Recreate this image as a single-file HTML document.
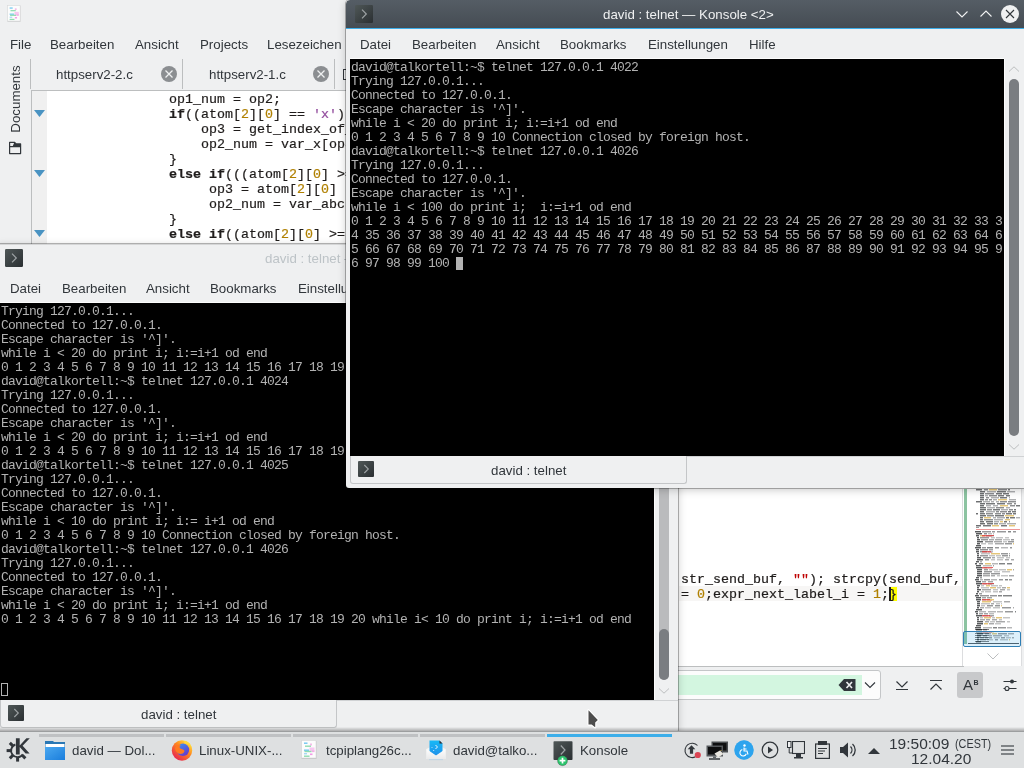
<!DOCTYPE html>
<html><head><meta charset="utf-8">
<style>
*{margin:0;padding:0;box-sizing:border-box}
html,body{width:1024px;height:768px;overflow:hidden;background:#eff0f1;font-family:"Liberation Sans",sans-serif;color:#31363b}
.a{position:absolute}
.t{position:absolute;white-space:pre;font-size:13.3px;line-height:16px;will-change:transform}
.term{position:absolute;background:#000;overflow:hidden}
.term pre{position:absolute;font-family:"Liberation Mono",monospace;font-size:13px;letter-spacing:-0.8012px;line-height:14px;color:#b2b2b2;white-space:pre;will-change:transform}
.code{position:absolute;font-family:"Liberation Mono",monospace;font-size:13.33px;line-height:15px;color:#1f1c1b;white-space:pre;will-change:transform;-webkit-text-stroke:0.2px #1f1c1b}
.kw{font-weight:bold}
.num{color:#b08000;-webkit-text-stroke-color:#b08000}
.chr{color:#924c9d;-webkit-text-stroke-color:#924c9d}
.str{color:#bf0303;-webkit-text-stroke-color:#bf0303}
.icn{position:absolute;width:18px;height:18px;border-radius:2px;background:linear-gradient(135deg,#4d5356 0%,#3b4043 50%,#2f3336 100%);box-shadow:inset 0 0 0 1px rgba(0,0,0,.25)}
.icn:after{content:"";position:absolute;left:4px;top:5px;width:6px;height:6px;border-right:1px solid #a5aaad;border-top:1px solid #a5aaad;transform:rotate(45deg)}
.i16{width:16px;height:16px;border-radius:1px}
.i16:after{left:3.5px;top:4.5px;width:5.5px;height:5.5px}

</style></head><body>
<div id="kate" class="a" style="left:0;top:0;width:1024px;height:731px;background:#eff0f1;overflow:hidden">
  <!-- kate app icon -->
  <svg class="a" style="left:7px;top:5px" width="14" height="18" viewBox="0 0 16 20">
    <rect x="0.5" y="1" width="15" height="18" fill="#000" fill-opacity=".12"/>
    <rect x="0.5" y="0.5" width="14.5" height="17.5" fill="#fcfcfc" stroke="#d6d7d8" stroke-width=".6"/>
    <g style="filter:blur(0.3px)">
    <rect x="3" y="2.5" width="3.5" height="1.4" fill="#6ec6f0"/><rect x="9" y="3.5" width="2" height="2" fill="#f0a0e0" fill-opacity=".7"/>
    <rect x="4" y="5.5" width="6" height="1.4" fill="#8fdcb0"/>
    <rect x="8.5" y="7.5" width="5" height="4" fill="#f4b0ea" fill-opacity=".7"/>
    <rect x="3" y="9.5" width="5" height="1.4" fill="#6ec6f0"/>
    <rect x="3.5" y="10.8" width="7" height="1.4" fill="#8fdcb0"/><rect x="11" y="10.5" width="2.5" height="1.6" fill="#f0a0e0" fill-opacity=".8"/>
    <rect x="3" y="13" width="3" height="1.4" fill="#a8d8f5"/><rect x="9" y="13.5" width="2.5" height="1.6" fill="#f080e0" fill-opacity=".8"/>
    <rect x="3" y="15.5" width="5.5" height="1.4" fill="#8fdcb0"/>
    </g>
  </svg>
  <!-- menu -->
  <div class="t" style="left:10px;top:37px">File</div>
  <div class="t" style="left:50px;top:37px">Bearbeiten</div>
  <div class="t" style="left:135px;top:37px">Ansicht</div>
  <div class="t" style="left:200px;top:37px">Projects</div>
  <div class="t" style="left:267px;top:37px">Lesezeichen</div>
  <!-- left sidebar -->
  <div class="t" style="left:-18px;top:91px;transform:rotate(-90deg);width:68px;text-align:center">Documents</div>
  <svg class="a" style="left:8px;top:140px" width="14" height="15" viewBox="0 0 14 15"><path d="M1.6 2.3 H6.4 L8.2 3.9 H12.6 V13.6 H1.6 Z M1.6 6.6 H12.6" fill="none" stroke="#31363b" stroke-width="1.2" stroke-linejoin="round"/><path d="M6.4 2.3 L8.2 3.9 H12.6 V6.6 H4.6 Z" fill="#31363b"/></svg>
  <!-- tabs -->
  <div class="a" style="left:30px;top:59px;width:1px;height:30px;background:#bcbebf"></div>
  <div class="t" style="left:56px;top:67px">httpserv2-2.c</div>
  <svg class="a" style="left:161px;top:66px" width="16" height="16"><circle cx="8" cy="8" r="8" fill="#8b8e91"/><path d="M4.5 4.5 L11.5 11.5 M11.5 4.5 L4.5 11.5" stroke="#eff0f1" stroke-width="1.3"/></svg>
  <div class="a" style="left:182px;top:59px;width:1px;height:30px;background:#bcbebf"></div>
  <div class="t" style="left:209px;top:67px">httpserv2-1.c</div>
  <svg class="a" style="left:313px;top:66px" width="16" height="16"><circle cx="8" cy="8" r="8" fill="#8b8e91"/><path d="M4.5 4.5 L11.5 11.5 M11.5 4.5 L4.5 11.5" stroke="#eff0f1" stroke-width="1.3"/></svg>
  <div class="a" style="left:334px;top:59px;width:1px;height:30px;background:#bcbebf"></div>
  <div class="a" style="left:343px;top:69px;width:6px;height:11px;border:1px solid #31363b;border-right:none"></div>
  <!-- code frame -->
  <div class="a" style="left:31px;top:90px;width:933px;height:577px;border-top:1px solid #bcbebf;border-left:1px solid #bcbebf;border-bottom:1px solid #bcbebf;background:#fff"></div>
  <div class="a" style="left:32px;top:91px;width:15px;height:575px;background:#f0f0f0"></div>
  <svg class="a" style="left:32px;top:91px" width="15" height="160">
    <path d="M2 19 H13 L7.5 26 Z" fill="#4a93c2"/>
    <path d="M2 79 H13 L7.5 86 Z" fill="#4a93c2"/>
    <path d="M2 139 H13 L7.5 146 Z" fill="#4a93c2"/>
  </svg>
  <pre class="code" style="left:169px;top:92px">op1_num = op2;
<span class="kw">if</span>((atom[<span class="num">2</span>][<span class="num">0</span>] == <span class="chr">'x'</span>) &amp;&amp; (atom[<span class="num">2</span>][<span class="num">1</span>] == <span class="num">0</span>))
    op3 = get_index_of_var(atom[<span class="num">2</span>]);
    op2_num = var_x[op3];
}
<span class="kw">else</span> <span class="kw">if</span>(((atom[<span class="num">2</span>][<span class="num">0</span>] &gt;= <span class="chr">'a'</span>)
     op3 = atom[<span class="num">2</span>][<span class="num">0</span>] - <span class="chr">'a'</span>;
     op2_num = var_abc[op3];
}
<span class="kw">else</span> <span class="kw">if</span>((atom[<span class="num">2</span>][<span class="num">0</span>] &gt;= <span class="chr">'0'</span>)
     op3 = atom[<span class="num">2</span>][<span class="num">0</span>] - <span class="chr">'0'</span>;</pre>
  <!-- bottom-right code -->
  <div class="a" style="left:679px;top:586px;width:284px;height:15px;background:#f7f6f5"></div>
  <div class="a" style="left:889px;top:587px;width:8px;height:14px;background:#ffff00"></div>
  <pre class="code" style="left:681px;top:572px">str_send_buf, <span class="str">""</span>); strcpy(send_buf, <span class="str">""</span>);
= <span class="num">0</span>;expr_next_label_i = <span class="num">1</span>;}</pre>
  <div class="a" style="left:889px;top:587px;width:2px;height:14px;background:#1f1c1b"></div>
  <!-- minimap -->
  <div class="a" style="left:962px;top:489px;width:1px;height:177px;background:#dcdddf"></div>
    <div class="a" style="left:963px;top:489px;width:59px;height:177px;background:#fff;border-right:1px solid #dcdddf"></div>
  <div class="a" style="left:964px;top:489px;width:3px;height:155px;background:#8cc3a1"></div>
  <svg class="a" style="left:966px;top:489px;filter:blur(0.35px)" width="56" height="156"><rect x="10" y="0" width="6" height="1" fill="#2f3235" fill-opacity="0.7"/><rect x="10" y="1" width="6" height="1" fill="#2f3235" fill-opacity="0.32"/><rect x="18" y="0" width="4" height="1" fill="#2f3235" fill-opacity="0.55"/><rect x="18" y="1" width="4" height="1" fill="#2f3235" fill-opacity="0.25"/><rect x="23" y="0" width="8" height="1" fill="#d2a020" fill-opacity="0.6"/><rect x="23" y="1" width="8" height="1" fill="#d2a020" fill-opacity="0.27"/><rect x="32" y="0" width="9" height="1" fill="#2f3235" fill-opacity="0.55"/><rect x="32" y="1" width="9" height="1" fill="#2f3235" fill-opacity="0.25"/><rect x="42" y="0" width="2" height="1" fill="#2f3235" fill-opacity="0.66"/><rect x="42" y="1" width="2" height="1" fill="#2f3235" fill-opacity="0.3"/><rect x="14" y="2" width="5" height="1" fill="#2f3235" fill-opacity="0.7"/><rect x="14" y="3" width="5" height="1" fill="#2f3235" fill-opacity="0.32"/><rect x="21" y="2" width="9" height="1" fill="#2f3235" fill-opacity="0.39"/><rect x="21" y="3" width="9" height="1" fill="#2f3235" fill-opacity="0.17"/><rect x="31" y="2" width="9" height="1" fill="#2f3235" fill-opacity="0.66"/><rect x="31" y="3" width="9" height="1" fill="#2f3235" fill-opacity="0.3"/><rect x="41" y="2" width="8" height="1" fill="#2f3235" fill-opacity="0.39"/><rect x="41" y="3" width="8" height="1" fill="#2f3235" fill-opacity="0.17"/><rect x="14" y="4" width="4" height="1" fill="#2f3235" fill-opacity="0.7"/><rect x="14" y="5" width="4" height="1" fill="#2f3235" fill-opacity="0.32"/><rect x="19" y="4" width="9" height="1" fill="#2f3235" fill-opacity="0.55"/><rect x="19" y="5" width="9" height="1" fill="#2f3235" fill-opacity="0.25"/><rect x="30" y="4" width="6" height="1" fill="#2f3235" fill-opacity="0.66"/><rect x="30" y="5" width="6" height="1" fill="#2f3235" fill-opacity="0.3"/><rect x="37" y="4" width="6" height="1" fill="#2f3235" fill-opacity="0.66"/><rect x="37" y="5" width="6" height="1" fill="#2f3235" fill-opacity="0.3"/><rect x="14" y="6" width="4" height="1" fill="#2f3235" fill-opacity="0.7"/><rect x="14" y="7" width="4" height="1" fill="#2f3235" fill-opacity="0.32"/><rect x="19" y="6" width="3" height="1" fill="#2f3235" fill-opacity="0.39"/><rect x="19" y="7" width="3" height="1" fill="#2f3235" fill-opacity="0.17"/><rect x="23" y="6" width="8" height="1" fill="#2f3235" fill-opacity="0.55"/><rect x="23" y="7" width="8" height="1" fill="#2f3235" fill-opacity="0.25"/><rect x="32" y="6" width="6" height="1" fill="#2f3235" fill-opacity="0.66"/><rect x="32" y="7" width="6" height="1" fill="#2f3235" fill-opacity="0.3"/><rect x="40" y="6" width="4" height="1" fill="#2f3235" fill-opacity="0.66"/><rect x="40" y="7" width="4" height="1" fill="#2f3235" fill-opacity="0.3"/><rect x="14" y="8" width="4" height="1" fill="#2f3235" fill-opacity="0.7"/><rect x="14" y="9" width="4" height="1" fill="#2f3235" fill-opacity="0.32"/><rect x="20" y="8" width="3" height="1" fill="#2f3235" fill-opacity="0.55"/><rect x="20" y="9" width="3" height="1" fill="#2f3235" fill-opacity="0.25"/><rect x="25" y="8" width="8" height="1" fill="#2f3235" fill-opacity="0.39"/><rect x="25" y="9" width="8" height="1" fill="#2f3235" fill-opacity="0.17"/><rect x="34" y="8" width="7" height="1" fill="#2f3235" fill-opacity="0.66"/><rect x="34" y="9" width="7" height="1" fill="#2f3235" fill-opacity="0.3"/><rect x="43" y="8" width="1" height="1" fill="#2f3235" fill-opacity="0.39"/><rect x="43" y="9" width="1" height="1" fill="#2f3235" fill-opacity="0.17"/><rect x="14" y="10" width="4" height="1" fill="#2f3235" fill-opacity="0.7"/><rect x="14" y="11" width="4" height="1" fill="#2f3235" fill-opacity="0.32"/><rect x="19" y="10" width="3" height="1" fill="#2f3235" fill-opacity="0.55"/><rect x="19" y="11" width="3" height="1" fill="#2f3235" fill-opacity="0.25"/><rect x="23" y="10" width="3" height="1" fill="#2f3235" fill-opacity="0.55"/><rect x="23" y="11" width="3" height="1" fill="#2f3235" fill-opacity="0.25"/><rect x="27" y="10" width="4" height="1" fill="#2f3235" fill-opacity="0.39"/><rect x="27" y="11" width="4" height="1" fill="#2f3235" fill-opacity="0.17"/><rect x="32" y="10" width="9" height="1" fill="#d2a020" fill-opacity="0.6"/><rect x="32" y="11" width="9" height="1" fill="#d2a020" fill-opacity="0.27"/><rect x="43" y="10" width="7" height="1" fill="#2f3235" fill-opacity="0.39"/><rect x="43" y="11" width="7" height="1" fill="#2f3235" fill-opacity="0.17"/><rect x="10" y="12" width="6" height="1" fill="#2f3235" fill-opacity="0.7"/><rect x="10" y="13" width="6" height="1" fill="#2f3235" fill-opacity="0.32"/><rect x="17" y="12" width="7" height="1" fill="#2f3235" fill-opacity="0.39"/><rect x="17" y="13" width="7" height="1" fill="#2f3235" fill-opacity="0.17"/><rect x="25" y="12" width="3" height="1" fill="#2f3235" fill-opacity="0.39"/><rect x="25" y="13" width="3" height="1" fill="#2f3235" fill-opacity="0.17"/><rect x="30" y="12" width="3" height="1" fill="#2f3235" fill-opacity="0.39"/><rect x="30" y="13" width="3" height="1" fill="#2f3235" fill-opacity="0.17"/><rect x="34" y="12" width="7" height="1" fill="#2f3235" fill-opacity="0.55"/><rect x="34" y="13" width="7" height="1" fill="#2f3235" fill-opacity="0.25"/><rect x="42" y="12" width="8" height="1" fill="#2f3235" fill-opacity="0.55"/><rect x="42" y="13" width="8" height="1" fill="#2f3235" fill-opacity="0.25"/><rect x="14" y="14" width="5" height="1" fill="#2f3235" fill-opacity="0.7"/><rect x="14" y="15" width="5" height="1" fill="#2f3235" fill-opacity="0.32"/><rect x="20" y="14" width="9" height="1" fill="#2f3235" fill-opacity="0.66"/><rect x="20" y="15" width="9" height="1" fill="#2f3235" fill-opacity="0.3"/><rect x="31" y="14" width="8" height="1" fill="#2f3235" fill-opacity="0.66"/><rect x="31" y="15" width="8" height="1" fill="#2f3235" fill-opacity="0.3"/><rect x="41" y="14" width="5" height="1" fill="#2f3235" fill-opacity="0.55"/><rect x="41" y="15" width="5" height="1" fill="#2f3235" fill-opacity="0.25"/><rect x="48" y="14" width="2" height="1" fill="#2f3235" fill-opacity="0.55"/><rect x="48" y="15" width="2" height="1" fill="#2f3235" fill-opacity="0.25"/><rect x="14" y="16" width="4" height="1" fill="#2f3235" fill-opacity="0.7"/><rect x="14" y="17" width="4" height="1" fill="#2f3235" fill-opacity="0.32"/><rect x="20" y="16" width="5" height="1" fill="#2f3235" fill-opacity="0.39"/><rect x="20" y="17" width="5" height="1" fill="#2f3235" fill-opacity="0.17"/><rect x="27" y="16" width="5" height="1" fill="#2f3235" fill-opacity="0.39"/><rect x="27" y="17" width="5" height="1" fill="#2f3235" fill-opacity="0.17"/><rect x="34" y="16" width="8" height="1" fill="#d2a020" fill-opacity="0.6"/><rect x="34" y="17" width="8" height="1" fill="#d2a020" fill-opacity="0.27"/><rect x="44" y="16" width="5" height="1" fill="#2f3235" fill-opacity="0.55"/><rect x="44" y="17" width="5" height="1" fill="#2f3235" fill-opacity="0.25"/><rect x="50" y="16" width="4" height="1" fill="#2f3235" fill-opacity="0.66"/><rect x="50" y="17" width="4" height="1" fill="#2f3235" fill-opacity="0.3"/><rect x="14" y="18" width="6" height="1" fill="#2f3235" fill-opacity="0.7"/><rect x="14" y="19" width="6" height="1" fill="#2f3235" fill-opacity="0.32"/><rect x="21" y="18" width="8" height="1" fill="#2f3235" fill-opacity="0.39"/><rect x="21" y="19" width="8" height="1" fill="#2f3235" fill-opacity="0.17"/><rect x="30" y="18" width="8" height="1" fill="#2f3235" fill-opacity="0.55"/><rect x="30" y="19" width="8" height="1" fill="#2f3235" fill-opacity="0.25"/><rect x="40" y="18" width="4" height="1" fill="#2f3235" fill-opacity="0.39"/><rect x="40" y="19" width="4" height="1" fill="#2f3235" fill-opacity="0.17"/><rect x="14" y="20" width="6" height="1" fill="#2f3235" fill-opacity="0.7"/><rect x="14" y="21" width="6" height="1" fill="#2f3235" fill-opacity="0.32"/><rect x="21" y="20" width="5" height="1" fill="#2f3235" fill-opacity="0.55"/><rect x="21" y="21" width="5" height="1" fill="#2f3235" fill-opacity="0.25"/><rect x="27" y="20" width="7" height="1" fill="#2f3235" fill-opacity="0.66"/><rect x="27" y="21" width="7" height="1" fill="#2f3235" fill-opacity="0.3"/><rect x="35" y="20" width="7" height="1" fill="#2f3235" fill-opacity="0.39"/><rect x="35" y="21" width="7" height="1" fill="#2f3235" fill-opacity="0.17"/><rect x="43" y="20" width="4" height="1" fill="#2f3235" fill-opacity="0.55"/><rect x="43" y="21" width="4" height="1" fill="#2f3235" fill-opacity="0.25"/><rect x="48" y="20" width="2" height="1" fill="#2f3235" fill-opacity="0.66"/><rect x="48" y="21" width="2" height="1" fill="#2f3235" fill-opacity="0.3"/><rect x="14" y="22" width="4" height="1" fill="#2f3235" fill-opacity="0.7"/><rect x="14" y="23" width="4" height="1" fill="#2f3235" fill-opacity="0.32"/><rect x="20" y="22" width="9" height="1" fill="#2f3235" fill-opacity="0.39"/><rect x="20" y="23" width="9" height="1" fill="#2f3235" fill-opacity="0.17"/><rect x="30" y="22" width="3" height="1" fill="#2f3235" fill-opacity="0.55"/><rect x="30" y="23" width="3" height="1" fill="#2f3235" fill-opacity="0.25"/><rect x="34" y="22" width="7" height="1" fill="#2f3235" fill-opacity="0.55"/><rect x="34" y="23" width="7" height="1" fill="#2f3235" fill-opacity="0.25"/><rect x="42" y="22" width="3" height="1" fill="#2f3235" fill-opacity="0.66"/><rect x="42" y="23" width="3" height="1" fill="#2f3235" fill-opacity="0.3"/><rect x="46" y="22" width="4" height="1" fill="#2f3235" fill-opacity="0.66"/><rect x="46" y="23" width="4" height="1" fill="#2f3235" fill-opacity="0.3"/><rect x="10" y="24" width="2" height="1" fill="#2f3235" fill-opacity="0.7"/><rect x="10" y="25" width="2" height="1" fill="#2f3235" fill-opacity="0.32"/><rect x="14" y="24" width="5" height="1" fill="#2f3235" fill-opacity="0.66"/><rect x="14" y="25" width="5" height="1" fill="#2f3235" fill-opacity="0.3"/><rect x="20" y="24" width="7" height="1" fill="#2f3235" fill-opacity="0.55"/><rect x="20" y="25" width="7" height="1" fill="#2f3235" fill-opacity="0.25"/><rect x="29" y="24" width="6" height="1" fill="#2f3235" fill-opacity="0.55"/><rect x="29" y="25" width="6" height="1" fill="#2f3235" fill-opacity="0.25"/><rect x="36" y="24" width="3" height="1" fill="#2f3235" fill-opacity="0.55"/><rect x="36" y="25" width="3" height="1" fill="#2f3235" fill-opacity="0.25"/><rect x="40" y="24" width="6" height="1" fill="#2f3235" fill-opacity="0.66"/><rect x="40" y="25" width="6" height="1" fill="#2f3235" fill-opacity="0.3"/><rect x="47" y="24" width="3" height="1" fill="#2f3235" fill-opacity="0.66"/><rect x="47" y="25" width="3" height="1" fill="#2f3235" fill-opacity="0.3"/><rect x="14" y="26" width="6" height="1" fill="#2f3235" fill-opacity="0.7"/><rect x="14" y="27" width="6" height="1" fill="#2f3235" fill-opacity="0.32"/><rect x="21" y="26" width="7" height="1" fill="#2f3235" fill-opacity="0.55"/><rect x="21" y="27" width="7" height="1" fill="#2f3235" fill-opacity="0.25"/><rect x="29" y="26" width="9" height="1" fill="#2f3235" fill-opacity="0.66"/><rect x="29" y="27" width="9" height="1" fill="#2f3235" fill-opacity="0.3"/><rect x="39" y="26" width="9" height="1" fill="#d2a020" fill-opacity="0.6"/><rect x="39" y="27" width="9" height="1" fill="#d2a020" fill-opacity="0.27"/><rect x="14" y="28" width="3" height="1" fill="#2f3235" fill-opacity="0.7"/><rect x="14" y="29" width="3" height="1" fill="#2f3235" fill-opacity="0.32"/><rect x="18" y="28" width="7" height="1" fill="#d2a020" fill-opacity="0.6"/><rect x="18" y="29" width="7" height="1" fill="#d2a020" fill-opacity="0.27"/><rect x="27" y="28" width="3" height="1" fill="#2f3235" fill-opacity="0.39"/><rect x="27" y="29" width="3" height="1" fill="#2f3235" fill-opacity="0.17"/><rect x="31" y="28" width="8" height="1" fill="#2f3235" fill-opacity="0.39"/><rect x="31" y="29" width="8" height="1" fill="#2f3235" fill-opacity="0.17"/><rect x="40" y="28" width="3" height="1" fill="#2f3235" fill-opacity="0.66"/><rect x="40" y="29" width="3" height="1" fill="#2f3235" fill-opacity="0.3"/><rect x="44" y="28" width="5" height="1" fill="#2f3235" fill-opacity="0.66"/><rect x="44" y="29" width="5" height="1" fill="#2f3235" fill-opacity="0.3"/><rect x="50" y="28" width="4" height="1" fill="#2f3235" fill-opacity="0.39"/><rect x="50" y="29" width="4" height="1" fill="#2f3235" fill-opacity="0.17"/><rect x="14" y="30" width="3" height="1" fill="#2f3235" fill-opacity="0.7"/><rect x="14" y="31" width="3" height="1" fill="#2f3235" fill-opacity="0.32"/><rect x="18" y="30" width="9" height="1" fill="#2f3235" fill-opacity="0.55"/><rect x="18" y="31" width="9" height="1" fill="#2f3235" fill-opacity="0.25"/><rect x="28" y="30" width="9" height="1" fill="#2f3235" fill-opacity="0.39"/><rect x="28" y="31" width="9" height="1" fill="#2f3235" fill-opacity="0.17"/><rect x="39" y="30" width="5" height="1" fill="#d2a020" fill-opacity="0.6"/><rect x="39" y="31" width="5" height="1" fill="#d2a020" fill-opacity="0.27"/><rect x="14" y="32" width="4" height="1" fill="#2f3235" fill-opacity="0.7"/><rect x="14" y="33" width="4" height="1" fill="#2f3235" fill-opacity="0.32"/><rect x="20" y="32" width="7" height="1" fill="#2f3235" fill-opacity="0.66"/><rect x="20" y="33" width="7" height="1" fill="#2f3235" fill-opacity="0.3"/><rect x="28" y="32" width="5" height="1" fill="#2f3235" fill-opacity="0.39"/><rect x="28" y="33" width="5" height="1" fill="#2f3235" fill-opacity="0.17"/><rect x="34" y="32" width="3" height="1" fill="#d2a020" fill-opacity="0.6"/><rect x="34" y="33" width="3" height="1" fill="#d2a020" fill-opacity="0.27"/><rect x="38" y="32" width="3" height="1" fill="#2f3235" fill-opacity="0.66"/><rect x="38" y="33" width="3" height="1" fill="#2f3235" fill-opacity="0.3"/><rect x="43" y="32" width="1" height="1" fill="#2f3235" fill-opacity="0.55"/><rect x="43" y="33" width="1" height="1" fill="#2f3235" fill-opacity="0.25"/><rect x="14" y="34" width="5" height="1" fill="#2f3235" fill-opacity="0.7"/><rect x="14" y="35" width="5" height="1" fill="#2f3235" fill-opacity="0.32"/><rect x="21" y="34" width="6" height="1" fill="#2f3235" fill-opacity="0.66"/><rect x="21" y="35" width="6" height="1" fill="#2f3235" fill-opacity="0.3"/><rect x="28" y="34" width="4" height="1" fill="#2f3235" fill-opacity="0.55"/><rect x="28" y="35" width="4" height="1" fill="#2f3235" fill-opacity="0.25"/><rect x="33" y="34" width="7" height="1" fill="#2f3235" fill-opacity="0.39"/><rect x="33" y="35" width="7" height="1" fill="#2f3235" fill-opacity="0.17"/><rect x="41" y="34" width="9" height="1" fill="#2f3235" fill-opacity="0.39"/><rect x="41" y="35" width="9" height="1" fill="#2f3235" fill-opacity="0.17"/><rect x="10" y="36" width="5" height="1" fill="#2f3235" fill-opacity="0.7"/><rect x="10" y="37" width="5" height="1" fill="#2f3235" fill-opacity="0.32"/><rect x="17" y="36" width="8" height="1" fill="#2f3235" fill-opacity="0.66"/><rect x="17" y="37" width="8" height="1" fill="#2f3235" fill-opacity="0.3"/><rect x="26" y="36" width="7" height="1" fill="#d2a020" fill-opacity="0.6"/><rect x="26" y="37" width="7" height="1" fill="#d2a020" fill-opacity="0.27"/><rect x="35" y="36" width="6" height="1" fill="#2f3235" fill-opacity="0.66"/><rect x="35" y="37" width="6" height="1" fill="#2f3235" fill-opacity="0.3"/><rect x="43" y="36" width="6" height="1" fill="#d2a020" fill-opacity="0.6"/><rect x="43" y="37" width="6" height="1" fill="#d2a020" fill-opacity="0.27"/><rect x="10" y="38" width="3" height="1" fill="#2f3235" fill-opacity="0.5"/><rect x="10" y="40" width="44" height="1" fill="#e05050" fill-opacity="0.6"/><rect x="9" y="42" width="6" height="1" fill="#2f3235" fill-opacity="0.8"/><rect x="9" y="43" width="6" height="1" fill="#2f3235" fill-opacity="0.36"/><rect x="16" y="42" width="9" height="1" fill="#2f3235" fill-opacity="0.5"/><rect x="16" y="43" width="9" height="1" fill="#2f3235" fill-opacity="0.23"/><rect x="26" y="42" width="3" height="1" fill="#2f3235" fill-opacity="0.5"/><rect x="26" y="43" width="3" height="1" fill="#2f3235" fill-opacity="0.23"/><rect x="31" y="42" width="9" height="1" fill="#2f3235" fill-opacity="0.5"/><rect x="31" y="43" width="9" height="1" fill="#2f3235" fill-opacity="0.23"/><rect x="42" y="42" width="3" height="1" fill="#2f3235" fill-opacity="0.6"/><rect x="42" y="43" width="3" height="1" fill="#2f3235" fill-opacity="0.27"/><rect x="47" y="42" width="3" height="1" fill="#2f3235" fill-opacity="0.5"/><rect x="47" y="43" width="3" height="1" fill="#2f3235" fill-opacity="0.23"/><rect x="10" y="44" width="6" height="1" fill="#2f3235" fill-opacity="0.8"/><rect x="10" y="45" width="6" height="1" fill="#2f3235" fill-opacity="0.36"/><rect x="18" y="44" width="3" height="1" fill="#2f3235" fill-opacity="0.54"/><rect x="18" y="45" width="3" height="1" fill="#2f3235" fill-opacity="0.24"/><rect x="22" y="44" width="4" height="1" fill="#2f3235" fill-opacity="0.32"/><rect x="22" y="45" width="4" height="1" fill="#2f3235" fill-opacity="0.14"/><rect x="27" y="44" width="1" height="1" fill="#2f3235" fill-opacity="0.32"/><rect x="27" y="45" width="1" height="1" fill="#2f3235" fill-opacity="0.14"/><rect x="10" y="46" width="3" height="1" fill="#2f3235" fill-opacity="0.8"/><rect x="10" y="47" width="3" height="1" fill="#2f3235" fill-opacity="0.36"/><rect x="14" y="46" width="5" height="1" fill="#d2a020" fill-opacity="0.6"/><rect x="14" y="47" width="5" height="1" fill="#d2a020" fill-opacity="0.27"/><rect x="20" y="46" width="8" height="1" fill="#2f3235" fill-opacity="0.45"/><rect x="20" y="47" width="8" height="1" fill="#2f3235" fill-opacity="0.2"/><rect x="16" y="46" width="12" height="1" fill="#e03c3c" fill-opacity="0.8"/><rect x="16" y="47" width="10" height="1" fill="#e03c3c" fill-opacity="0.35"/><rect x="11" y="48" width="2" height="1" fill="#2f3235" fill-opacity="0.8"/><rect x="11" y="49" width="2" height="1" fill="#2f3235" fill-opacity="0.36"/><rect x="14" y="48" width="9" height="1" fill="#2f3235" fill-opacity="0.5"/><rect x="14" y="49" width="9" height="1" fill="#2f3235" fill-opacity="0.23"/><rect x="25" y="48" width="4" height="1" fill="#2f3235" fill-opacity="0.29"/><rect x="25" y="49" width="4" height="1" fill="#2f3235" fill-opacity="0.13"/><rect x="30" y="48" width="7" height="1" fill="#2f3235" fill-opacity="0.29"/><rect x="30" y="49" width="7" height="1" fill="#2f3235" fill-opacity="0.13"/><rect x="39" y="48" width="4" height="1" fill="#2f3235" fill-opacity="0.29"/><rect x="39" y="49" width="4" height="1" fill="#2f3235" fill-opacity="0.13"/><rect x="11" y="50" width="3" height="1" fill="#2f3235" fill-opacity="0.8"/><rect x="11" y="51" width="3" height="1" fill="#2f3235" fill-opacity="0.36"/><rect x="15" y="50" width="7" height="1" fill="#2f3235" fill-opacity="0.5"/><rect x="15" y="51" width="7" height="1" fill="#2f3235" fill-opacity="0.23"/><rect x="23" y="50" width="5" height="1" fill="#2f3235" fill-opacity="0.42"/><rect x="23" y="51" width="5" height="1" fill="#2f3235" fill-opacity="0.19"/><rect x="29" y="50" width="7" height="1" fill="#2f3235" fill-opacity="0.42"/><rect x="29" y="51" width="7" height="1" fill="#2f3235" fill-opacity="0.19"/><rect x="37" y="50" width="7" height="1" fill="#2f3235" fill-opacity="0.29"/><rect x="37" y="51" width="7" height="1" fill="#2f3235" fill-opacity="0.13"/><rect x="45" y="50" width="3" height="1" fill="#2f3235" fill-opacity="0.5"/><rect x="45" y="51" width="3" height="1" fill="#2f3235" fill-opacity="0.23"/><rect x="11" y="52" width="6" height="1" fill="#2f3235" fill-opacity="0.8"/><rect x="11" y="53" width="6" height="1" fill="#2f3235" fill-opacity="0.36"/><rect x="19" y="52" width="8" height="1" fill="#2f3235" fill-opacity="0.5"/><rect x="19" y="53" width="8" height="1" fill="#2f3235" fill-opacity="0.23"/><rect x="28" y="52" width="8" height="1" fill="#2f3235" fill-opacity="0.42"/><rect x="28" y="53" width="8" height="1" fill="#2f3235" fill-opacity="0.19"/><rect x="37" y="52" width="4" height="1" fill="#2f3235" fill-opacity="0.29"/><rect x="37" y="53" width="4" height="1" fill="#2f3235" fill-opacity="0.13"/><rect x="42" y="52" width="6" height="1" fill="#2f3235" fill-opacity="0.5"/><rect x="42" y="53" width="6" height="1" fill="#2f3235" fill-opacity="0.23"/><rect x="11" y="54" width="3" height="1" fill="#2f3235" fill-opacity="0.8"/><rect x="11" y="55" width="3" height="1" fill="#2f3235" fill-opacity="0.36"/><rect x="15" y="54" width="5" height="1" fill="#2f3235" fill-opacity="0.29"/><rect x="15" y="55" width="5" height="1" fill="#2f3235" fill-opacity="0.13"/><rect x="22" y="54" width="5" height="1" fill="#2f3235" fill-opacity="0.29"/><rect x="22" y="55" width="5" height="1" fill="#2f3235" fill-opacity="0.13"/><rect x="29" y="54" width="9" height="1" fill="#2f3235" fill-opacity="0.42"/><rect x="29" y="55" width="9" height="1" fill="#2f3235" fill-opacity="0.19"/><rect x="39" y="54" width="7" height="1" fill="#2f3235" fill-opacity="0.5"/><rect x="39" y="55" width="7" height="1" fill="#2f3235" fill-opacity="0.23"/><rect x="47" y="54" width="1" height="1" fill="#d2a020" fill-opacity="0.6"/><rect x="47" y="55" width="1" height="1" fill="#d2a020" fill-opacity="0.27"/><rect x="10" y="56" width="5" height="1" fill="#2f3235" fill-opacity="0.8"/><rect x="10" y="57" width="5" height="1" fill="#2f3235" fill-opacity="0.36"/><rect x="9" y="58" width="6" height="1" fill="#2f3235" fill-opacity="0.8"/><rect x="9" y="59" width="6" height="1" fill="#2f3235" fill-opacity="0.36"/><rect x="16" y="58" width="4" height="1" fill="#2f3235" fill-opacity="0.5"/><rect x="16" y="59" width="4" height="1" fill="#2f3235" fill-opacity="0.23"/><rect x="21" y="58" width="6" height="1" fill="#2f3235" fill-opacity="0.6"/><rect x="21" y="59" width="6" height="1" fill="#2f3235" fill-opacity="0.27"/><rect x="29" y="58" width="4" height="1" fill="#2f3235" fill-opacity="0.5"/><rect x="29" y="59" width="4" height="1" fill="#2f3235" fill-opacity="0.23"/><rect x="35" y="58" width="7" height="1" fill="#2f3235" fill-opacity="0.35"/><rect x="35" y="59" width="7" height="1" fill="#2f3235" fill-opacity="0.16"/><rect x="44" y="58" width="2" height="1" fill="#2f3235" fill-opacity="0.5"/><rect x="44" y="59" width="2" height="1" fill="#2f3235" fill-opacity="0.23"/><rect x="10" y="60" width="3" height="1" fill="#2f3235" fill-opacity="0.8"/><rect x="10" y="61" width="3" height="1" fill="#2f3235" fill-opacity="0.36"/><rect x="14" y="60" width="8" height="1" fill="#2f3235" fill-opacity="0.54"/><rect x="14" y="61" width="8" height="1" fill="#2f3235" fill-opacity="0.24"/><rect x="23" y="60" width="4" height="1" fill="#2f3235" fill-opacity="0.45"/><rect x="23" y="61" width="4" height="1" fill="#2f3235" fill-opacity="0.2"/><rect x="10" y="62" width="3" height="1" fill="#2f3235" fill-opacity="0.8"/><rect x="10" y="63" width="3" height="1" fill="#2f3235" fill-opacity="0.36"/><rect x="14" y="62" width="7" height="1" fill="#2f3235" fill-opacity="0.54"/><rect x="14" y="63" width="7" height="1" fill="#2f3235" fill-opacity="0.24"/><rect x="22" y="62" width="5" height="1" fill="#2f3235" fill-opacity="0.32"/><rect x="22" y="63" width="5" height="1" fill="#2f3235" fill-opacity="0.14"/><rect x="16" y="62" width="9" height="1" fill="#e03c3c" fill-opacity="0.8"/><rect x="16" y="63" width="10" height="1" fill="#e03c3c" fill-opacity="0.35"/><rect x="11" y="64" width="2" height="1" fill="#2f3235" fill-opacity="0.8"/><rect x="11" y="65" width="2" height="1" fill="#2f3235" fill-opacity="0.36"/><rect x="15" y="64" width="9" height="1" fill="#2f3235" fill-opacity="0.29"/><rect x="15" y="65" width="9" height="1" fill="#2f3235" fill-opacity="0.13"/><rect x="25" y="64" width="9" height="1" fill="#d2a020" fill-opacity="0.6"/><rect x="25" y="65" width="9" height="1" fill="#d2a020" fill-opacity="0.27"/><rect x="35" y="64" width="7" height="1" fill="#2f3235" fill-opacity="0.5"/><rect x="35" y="65" width="7" height="1" fill="#2f3235" fill-opacity="0.23"/><rect x="43" y="64" width="1" height="1" fill="#2f3235" fill-opacity="0.42"/><rect x="43" y="65" width="1" height="1" fill="#2f3235" fill-opacity="0.19"/><rect x="11" y="66" width="2" height="1" fill="#2f3235" fill-opacity="0.8"/><rect x="11" y="67" width="2" height="1" fill="#2f3235" fill-opacity="0.36"/><rect x="14" y="66" width="8" height="1" fill="#2f3235" fill-opacity="0.5"/><rect x="14" y="67" width="8" height="1" fill="#2f3235" fill-opacity="0.23"/><rect x="23" y="66" width="6" height="1" fill="#2f3235" fill-opacity="0.29"/><rect x="23" y="67" width="6" height="1" fill="#2f3235" fill-opacity="0.13"/><rect x="30" y="66" width="5" height="1" fill="#2f3235" fill-opacity="0.29"/><rect x="30" y="67" width="5" height="1" fill="#2f3235" fill-opacity="0.13"/><rect x="36" y="66" width="6" height="1" fill="#2f3235" fill-opacity="0.5"/><rect x="36" y="67" width="6" height="1" fill="#2f3235" fill-opacity="0.23"/><rect x="43" y="66" width="1" height="1" fill="#2f3235" fill-opacity="0.5"/><rect x="43" y="67" width="1" height="1" fill="#2f3235" fill-opacity="0.23"/><rect x="11" y="68" width="4" height="1" fill="#2f3235" fill-opacity="0.8"/><rect x="11" y="69" width="4" height="1" fill="#2f3235" fill-opacity="0.36"/><rect x="17" y="68" width="8" height="1" fill="#2f3235" fill-opacity="0.5"/><rect x="17" y="69" width="8" height="1" fill="#2f3235" fill-opacity="0.23"/><rect x="26" y="68" width="3" height="1" fill="#2f3235" fill-opacity="0.42"/><rect x="26" y="69" width="3" height="1" fill="#2f3235" fill-opacity="0.19"/><rect x="31" y="68" width="7" height="1" fill="#2f3235" fill-opacity="0.29"/><rect x="31" y="69" width="7" height="1" fill="#2f3235" fill-opacity="0.13"/><rect x="40" y="68" width="4" height="1" fill="#2f3235" fill-opacity="0.29"/><rect x="40" y="69" width="4" height="1" fill="#2f3235" fill-opacity="0.13"/><rect x="11" y="70" width="6" height="1" fill="#2f3235" fill-opacity="0.8"/><rect x="11" y="71" width="6" height="1" fill="#2f3235" fill-opacity="0.36"/><rect x="19" y="70" width="4" height="1" fill="#2f3235" fill-opacity="0.5"/><rect x="19" y="71" width="4" height="1" fill="#2f3235" fill-opacity="0.23"/><rect x="25" y="70" width="4" height="1" fill="#2f3235" fill-opacity="0.29"/><rect x="25" y="71" width="4" height="1" fill="#2f3235" fill-opacity="0.13"/><rect x="31" y="70" width="6" height="1" fill="#2f3235" fill-opacity="0.29"/><rect x="31" y="71" width="6" height="1" fill="#2f3235" fill-opacity="0.13"/><rect x="39" y="70" width="4" height="1" fill="#2f3235" fill-opacity="0.42"/><rect x="39" y="71" width="4" height="1" fill="#2f3235" fill-opacity="0.19"/><rect x="45" y="70" width="3" height="1" fill="#2f3235" fill-opacity="0.42"/><rect x="45" y="71" width="3" height="1" fill="#2f3235" fill-opacity="0.19"/><rect x="10" y="72" width="3" height="1" fill="#2f3235" fill-opacity="0.8"/><rect x="10" y="73" width="3" height="1" fill="#2f3235" fill-opacity="0.36"/><rect x="14" y="72" width="2" height="1" fill="#2f3235" fill-opacity="0.4"/><rect x="14" y="73" width="2" height="1" fill="#2f3235" fill-opacity="0.18"/><rect x="9" y="74" width="2" height="1" fill="#2f3235" fill-opacity="0.8"/><rect x="9" y="75" width="2" height="1" fill="#2f3235" fill-opacity="0.36"/><rect x="13" y="74" width="4" height="1" fill="#2f3235" fill-opacity="0.6"/><rect x="13" y="75" width="4" height="1" fill="#2f3235" fill-opacity="0.27"/><rect x="19" y="74" width="6" height="1" fill="#d2a020" fill-opacity="0.6"/><rect x="19" y="75" width="6" height="1" fill="#d2a020" fill-opacity="0.27"/><rect x="26" y="74" width="6" height="1" fill="#2f3235" fill-opacity="0.35"/><rect x="26" y="75" width="6" height="1" fill="#2f3235" fill-opacity="0.16"/><rect x="33" y="74" width="6" height="1" fill="#2f3235" fill-opacity="0.6"/><rect x="33" y="75" width="6" height="1" fill="#2f3235" fill-opacity="0.27"/><rect x="41" y="74" width="5" height="1" fill="#2f3235" fill-opacity="0.6"/><rect x="41" y="75" width="5" height="1" fill="#2f3235" fill-opacity="0.27"/><rect x="10" y="76" width="5" height="1" fill="#2f3235" fill-opacity="0.8"/><rect x="10" y="77" width="5" height="1" fill="#2f3235" fill-opacity="0.36"/><rect x="17" y="76" width="9" height="1" fill="#2f3235" fill-opacity="0.32"/><rect x="17" y="77" width="9" height="1" fill="#2f3235" fill-opacity="0.14"/><rect x="27" y="76" width="1" height="1" fill="#2f3235" fill-opacity="0.45"/><rect x="27" y="77" width="1" height="1" fill="#2f3235" fill-opacity="0.2"/><rect x="10" y="78" width="6" height="1" fill="#2f3235" fill-opacity="0.8"/><rect x="10" y="79" width="6" height="1" fill="#2f3235" fill-opacity="0.36"/><rect x="18" y="78" width="3" height="1" fill="#2f3235" fill-opacity="0.32"/><rect x="18" y="79" width="3" height="1" fill="#2f3235" fill-opacity="0.14"/><rect x="16" y="78" width="11" height="1" fill="#e03c3c" fill-opacity="0.8"/><rect x="16" y="79" width="10" height="1" fill="#e03c3c" fill-opacity="0.35"/><rect x="11" y="80" width="5" height="1" fill="#2f3235" fill-opacity="0.8"/><rect x="11" y="81" width="5" height="1" fill="#2f3235" fill-opacity="0.36"/><rect x="18" y="80" width="4" height="1" fill="#2f3235" fill-opacity="0.5"/><rect x="18" y="81" width="4" height="1" fill="#2f3235" fill-opacity="0.23"/><rect x="23" y="80" width="9" height="1" fill="#2f3235" fill-opacity="0.29"/><rect x="23" y="81" width="9" height="1" fill="#2f3235" fill-opacity="0.13"/><rect x="33" y="80" width="7" height="1" fill="#2f3235" fill-opacity="0.29"/><rect x="33" y="81" width="7" height="1" fill="#2f3235" fill-opacity="0.13"/><rect x="41" y="80" width="5" height="1" fill="#d2a020" fill-opacity="0.6"/><rect x="41" y="81" width="5" height="1" fill="#d2a020" fill-opacity="0.27"/><rect x="47" y="80" width="1" height="1" fill="#2f3235" fill-opacity="0.42"/><rect x="47" y="81" width="1" height="1" fill="#2f3235" fill-opacity="0.19"/><rect x="11" y="82" width="5" height="1" fill="#2f3235" fill-opacity="0.8"/><rect x="11" y="83" width="5" height="1" fill="#2f3235" fill-opacity="0.36"/><rect x="18" y="82" width="8" height="1" fill="#2f3235" fill-opacity="0.5"/><rect x="18" y="83" width="8" height="1" fill="#2f3235" fill-opacity="0.23"/><rect x="28" y="82" width="6" height="1" fill="#2f3235" fill-opacity="0.29"/><rect x="28" y="83" width="6" height="1" fill="#2f3235" fill-opacity="0.13"/><rect x="36" y="82" width="8" height="1" fill="#2f3235" fill-opacity="0.29"/><rect x="36" y="83" width="8" height="1" fill="#2f3235" fill-opacity="0.13"/><rect x="11" y="84" width="5" height="1" fill="#2f3235" fill-opacity="0.8"/><rect x="11" y="85" width="5" height="1" fill="#2f3235" fill-opacity="0.36"/><rect x="17" y="84" width="7" height="1" fill="#2f3235" fill-opacity="0.5"/><rect x="17" y="85" width="7" height="1" fill="#2f3235" fill-opacity="0.23"/><rect x="25" y="84" width="9" height="1" fill="#2f3235" fill-opacity="0.5"/><rect x="25" y="85" width="9" height="1" fill="#2f3235" fill-opacity="0.23"/><rect x="11" y="86" width="5" height="1" fill="#2f3235" fill-opacity="0.8"/><rect x="11" y="87" width="5" height="1" fill="#2f3235" fill-opacity="0.36"/><rect x="17" y="86" width="7" height="1" fill="#2f3235" fill-opacity="0.42"/><rect x="17" y="87" width="7" height="1" fill="#2f3235" fill-opacity="0.19"/><rect x="25" y="86" width="4" height="1" fill="#2f3235" fill-opacity="0.42"/><rect x="25" y="87" width="4" height="1" fill="#2f3235" fill-opacity="0.19"/><rect x="31" y="86" width="3" height="1" fill="#2f3235" fill-opacity="0.29"/><rect x="31" y="87" width="3" height="1" fill="#2f3235" fill-opacity="0.13"/><rect x="35" y="86" width="7" height="1" fill="#2f3235" fill-opacity="0.29"/><rect x="35" y="87" width="7" height="1" fill="#2f3235" fill-opacity="0.13"/><rect x="43" y="86" width="5" height="1" fill="#2f3235" fill-opacity="0.42"/><rect x="43" y="87" width="5" height="1" fill="#2f3235" fill-opacity="0.19"/><rect x="10" y="88" width="3" height="1" fill="#2f3235" fill-opacity="0.8"/><rect x="10" y="89" width="3" height="1" fill="#2f3235" fill-opacity="0.36"/><rect x="14" y="88" width="2" height="1" fill="#2f3235" fill-opacity="0.48"/><rect x="14" y="89" width="2" height="1" fill="#2f3235" fill-opacity="0.22"/><rect x="9" y="90" width="4" height="1" fill="#2f3235" fill-opacity="0.8"/><rect x="9" y="91" width="4" height="1" fill="#2f3235" fill-opacity="0.36"/><rect x="14" y="90" width="3" height="1" fill="#2f3235" fill-opacity="0.35"/><rect x="14" y="91" width="3" height="1" fill="#2f3235" fill-opacity="0.16"/><rect x="18" y="90" width="6" height="1" fill="#2f3235" fill-opacity="0.5"/><rect x="18" y="91" width="6" height="1" fill="#2f3235" fill-opacity="0.23"/><rect x="25" y="90" width="6" height="1" fill="#2f3235" fill-opacity="0.35"/><rect x="25" y="91" width="6" height="1" fill="#2f3235" fill-opacity="0.16"/><rect x="33" y="90" width="4" height="1" fill="#2f3235" fill-opacity="0.5"/><rect x="33" y="91" width="4" height="1" fill="#2f3235" fill-opacity="0.23"/><rect x="39" y="90" width="3" height="1" fill="#2f3235" fill-opacity="0.6"/><rect x="39" y="91" width="3" height="1" fill="#2f3235" fill-opacity="0.27"/><rect x="43" y="90" width="3" height="1" fill="#2f3235" fill-opacity="0.5"/><rect x="43" y="91" width="3" height="1" fill="#2f3235" fill-opacity="0.23"/><rect x="10" y="92" width="5" height="1" fill="#2f3235" fill-opacity="0.8"/><rect x="10" y="93" width="5" height="1" fill="#2f3235" fill-opacity="0.36"/><rect x="16" y="92" width="4" height="1" fill="#2f3235" fill-opacity="0.45"/><rect x="16" y="93" width="4" height="1" fill="#2f3235" fill-opacity="0.2"/><rect x="22" y="92" width="5" height="1" fill="#2f3235" fill-opacity="0.45"/><rect x="22" y="93" width="5" height="1" fill="#2f3235" fill-opacity="0.2"/><rect x="10" y="94" width="6" height="1" fill="#2f3235" fill-opacity="0.8"/><rect x="10" y="95" width="6" height="1" fill="#2f3235" fill-opacity="0.36"/><rect x="17" y="94" width="4" height="1" fill="#2f3235" fill-opacity="0.32"/><rect x="17" y="95" width="4" height="1" fill="#2f3235" fill-opacity="0.14"/><rect x="22" y="94" width="6" height="1" fill="#2f3235" fill-opacity="0.45"/><rect x="22" y="95" width="6" height="1" fill="#2f3235" fill-opacity="0.2"/><rect x="16" y="94" width="12" height="1" fill="#e03c3c" fill-opacity="0.8"/><rect x="16" y="95" width="10" height="1" fill="#e03c3c" fill-opacity="0.35"/><rect x="11" y="96" width="3" height="1" fill="#2f3235" fill-opacity="0.8"/><rect x="11" y="97" width="3" height="1" fill="#2f3235" fill-opacity="0.36"/><rect x="15" y="96" width="3" height="1" fill="#2f3235" fill-opacity="0.29"/><rect x="15" y="97" width="3" height="1" fill="#2f3235" fill-opacity="0.13"/><rect x="20" y="96" width="4" height="1" fill="#d2a020" fill-opacity="0.6"/><rect x="20" y="97" width="4" height="1" fill="#d2a020" fill-opacity="0.27"/><rect x="25" y="96" width="7" height="1" fill="#2f3235" fill-opacity="0.29"/><rect x="25" y="97" width="7" height="1" fill="#2f3235" fill-opacity="0.13"/><rect x="33" y="96" width="3" height="1" fill="#2f3235" fill-opacity="0.29"/><rect x="33" y="97" width="3" height="1" fill="#2f3235" fill-opacity="0.13"/><rect x="11" y="98" width="2" height="1" fill="#2f3235" fill-opacity="0.8"/><rect x="11" y="99" width="2" height="1" fill="#2f3235" fill-opacity="0.36"/><rect x="15" y="98" width="8" height="1" fill="#2f3235" fill-opacity="0.29"/><rect x="15" y="99" width="8" height="1" fill="#2f3235" fill-opacity="0.13"/><rect x="24" y="98" width="6" height="1" fill="#d2a020" fill-opacity="0.6"/><rect x="24" y="99" width="6" height="1" fill="#d2a020" fill-opacity="0.27"/><rect x="31" y="98" width="4" height="1" fill="#2f3235" fill-opacity="0.29"/><rect x="31" y="99" width="4" height="1" fill="#2f3235" fill-opacity="0.13"/><rect x="36" y="98" width="4" height="1" fill="#2f3235" fill-opacity="0.42"/><rect x="36" y="99" width="4" height="1" fill="#2f3235" fill-opacity="0.19"/><rect x="41" y="98" width="3" height="1" fill="#d2a020" fill-opacity="0.6"/><rect x="41" y="99" width="3" height="1" fill="#d2a020" fill-opacity="0.27"/><rect x="11" y="100" width="4" height="1" fill="#2f3235" fill-opacity="0.8"/><rect x="11" y="101" width="4" height="1" fill="#2f3235" fill-opacity="0.36"/><rect x="16" y="100" width="9" height="1" fill="#2f3235" fill-opacity="0.42"/><rect x="16" y="101" width="9" height="1" fill="#2f3235" fill-opacity="0.19"/><rect x="27" y="100" width="5" height="1" fill="#2f3235" fill-opacity="0.29"/><rect x="27" y="101" width="5" height="1" fill="#2f3235" fill-opacity="0.13"/><rect x="34" y="100" width="5" height="1" fill="#2f3235" fill-opacity="0.42"/><rect x="34" y="101" width="5" height="1" fill="#2f3235" fill-opacity="0.19"/><rect x="41" y="100" width="3" height="1" fill="#2f3235" fill-opacity="0.29"/><rect x="41" y="101" width="3" height="1" fill="#2f3235" fill-opacity="0.13"/><rect x="11" y="102" width="2" height="1" fill="#2f3235" fill-opacity="0.8"/><rect x="11" y="103" width="2" height="1" fill="#2f3235" fill-opacity="0.36"/><rect x="15" y="102" width="3" height="1" fill="#2f3235" fill-opacity="0.29"/><rect x="15" y="103" width="3" height="1" fill="#2f3235" fill-opacity="0.13"/><rect x="19" y="102" width="6" height="1" fill="#2f3235" fill-opacity="0.29"/><rect x="19" y="103" width="6" height="1" fill="#2f3235" fill-opacity="0.13"/><rect x="27" y="102" width="5" height="1" fill="#2f3235" fill-opacity="0.29"/><rect x="27" y="103" width="5" height="1" fill="#2f3235" fill-opacity="0.13"/><rect x="33" y="102" width="3" height="1" fill="#2f3235" fill-opacity="0.42"/><rect x="33" y="103" width="3" height="1" fill="#2f3235" fill-opacity="0.19"/><rect x="10" y="104" width="2" height="1" fill="#2f3235" fill-opacity="0.8"/><rect x="10" y="105" width="2" height="1" fill="#2f3235" fill-opacity="0.36"/><rect x="13" y="104" width="3" height="1" fill="#2f3235" fill-opacity="0.48"/><rect x="13" y="105" width="3" height="1" fill="#2f3235" fill-opacity="0.22"/><rect x="9" y="106" width="4" height="1" fill="#2f3235" fill-opacity="0.8"/><rect x="9" y="107" width="4" height="1" fill="#2f3235" fill-opacity="0.36"/><rect x="14" y="106" width="9" height="1" fill="#2f3235" fill-opacity="0.5"/><rect x="14" y="107" width="9" height="1" fill="#2f3235" fill-opacity="0.23"/><rect x="24" y="106" width="7" height="1" fill="#2f3235" fill-opacity="0.5"/><rect x="24" y="107" width="7" height="1" fill="#2f3235" fill-opacity="0.23"/><rect x="32" y="106" width="4" height="1" fill="#2f3235" fill-opacity="0.6"/><rect x="32" y="107" width="4" height="1" fill="#2f3235" fill-opacity="0.27"/><rect x="37" y="106" width="9" height="1" fill="#2f3235" fill-opacity="0.6"/><rect x="37" y="107" width="9" height="1" fill="#2f3235" fill-opacity="0.27"/><rect x="10" y="108" width="5" height="1" fill="#2f3235" fill-opacity="0.8"/><rect x="10" y="109" width="5" height="1" fill="#2f3235" fill-opacity="0.36"/><rect x="16" y="108" width="4" height="1" fill="#2f3235" fill-opacity="0.45"/><rect x="16" y="109" width="4" height="1" fill="#2f3235" fill-opacity="0.2"/><rect x="21" y="108" width="5" height="1" fill="#2f3235" fill-opacity="0.45"/><rect x="21" y="109" width="5" height="1" fill="#2f3235" fill-opacity="0.2"/><rect x="10" y="110" width="5" height="1" fill="#2f3235" fill-opacity="0.8"/><rect x="10" y="111" width="5" height="1" fill="#2f3235" fill-opacity="0.36"/><rect x="16" y="110" width="4" height="1" fill="#2f3235" fill-opacity="0.32"/><rect x="16" y="111" width="4" height="1" fill="#2f3235" fill-opacity="0.14"/><rect x="21" y="110" width="7" height="1" fill="#d2a020" fill-opacity="0.6"/><rect x="21" y="111" width="7" height="1" fill="#d2a020" fill-opacity="0.27"/><rect x="16" y="110" width="8" height="1" fill="#e03c3c" fill-opacity="0.8"/><rect x="16" y="111" width="10" height="1" fill="#e03c3c" fill-opacity="0.35"/><rect x="11" y="112" width="3" height="1" fill="#2f3235" fill-opacity="0.8"/><rect x="11" y="113" width="3" height="1" fill="#2f3235" fill-opacity="0.36"/><rect x="16" y="112" width="9" height="1" fill="#d2a020" fill-opacity="0.6"/><rect x="16" y="113" width="9" height="1" fill="#d2a020" fill-opacity="0.27"/><rect x="27" y="112" width="9" height="1" fill="#2f3235" fill-opacity="0.29"/><rect x="27" y="113" width="9" height="1" fill="#2f3235" fill-opacity="0.13"/><rect x="38" y="112" width="6" height="1" fill="#2f3235" fill-opacity="0.42"/><rect x="38" y="113" width="6" height="1" fill="#2f3235" fill-opacity="0.19"/><rect x="11" y="114" width="3" height="1" fill="#2f3235" fill-opacity="0.8"/><rect x="11" y="115" width="3" height="1" fill="#2f3235" fill-opacity="0.36"/><rect x="15" y="114" width="9" height="1" fill="#2f3235" fill-opacity="0.29"/><rect x="15" y="115" width="9" height="1" fill="#2f3235" fill-opacity="0.13"/><rect x="25" y="114" width="3" height="1" fill="#2f3235" fill-opacity="0.42"/><rect x="25" y="115" width="3" height="1" fill="#2f3235" fill-opacity="0.19"/><rect x="30" y="114" width="4" height="1" fill="#2f3235" fill-opacity="0.29"/><rect x="30" y="115" width="4" height="1" fill="#2f3235" fill-opacity="0.13"/><rect x="35" y="114" width="1" height="1" fill="#2f3235" fill-opacity="0.29"/><rect x="35" y="115" width="1" height="1" fill="#2f3235" fill-opacity="0.13"/><rect x="11" y="116" width="3" height="1" fill="#2f3235" fill-opacity="0.8"/><rect x="11" y="117" width="3" height="1" fill="#2f3235" fill-opacity="0.36"/><rect x="15" y="116" width="4" height="1" fill="#2f3235" fill-opacity="0.29"/><rect x="15" y="117" width="4" height="1" fill="#2f3235" fill-opacity="0.13"/><rect x="21" y="116" width="6" height="1" fill="#2f3235" fill-opacity="0.5"/><rect x="21" y="117" width="6" height="1" fill="#2f3235" fill-opacity="0.23"/><rect x="29" y="116" width="5" height="1" fill="#2f3235" fill-opacity="0.5"/><rect x="29" y="117" width="5" height="1" fill="#2f3235" fill-opacity="0.23"/><rect x="35" y="116" width="1" height="1" fill="#d2a020" fill-opacity="0.6"/><rect x="35" y="117" width="1" height="1" fill="#d2a020" fill-opacity="0.27"/><rect x="11" y="118" width="2" height="1" fill="#2f3235" fill-opacity="0.8"/><rect x="11" y="119" width="2" height="1" fill="#2f3235" fill-opacity="0.36"/><rect x="14" y="118" width="4" height="1" fill="#2f3235" fill-opacity="0.42"/><rect x="14" y="119" width="4" height="1" fill="#2f3235" fill-opacity="0.19"/><rect x="19" y="118" width="6" height="1" fill="#2f3235" fill-opacity="0.29"/><rect x="19" y="119" width="6" height="1" fill="#2f3235" fill-opacity="0.13"/><rect x="27" y="118" width="7" height="1" fill="#2f3235" fill-opacity="0.29"/><rect x="27" y="119" width="7" height="1" fill="#2f3235" fill-opacity="0.13"/><rect x="36" y="118" width="9" height="1" fill="#2f3235" fill-opacity="0.5"/><rect x="36" y="119" width="9" height="1" fill="#2f3235" fill-opacity="0.23"/><rect x="47" y="118" width="1" height="1" fill="#2f3235" fill-opacity="0.42"/><rect x="47" y="119" width="1" height="1" fill="#2f3235" fill-opacity="0.19"/><rect x="10" y="120" width="6" height="1" fill="#2f3235" fill-opacity="0.8"/><rect x="10" y="121" width="6" height="1" fill="#2f3235" fill-opacity="0.36"/><rect x="9" y="122" width="3" height="1" fill="#2f3235" fill-opacity="0.8"/><rect x="9" y="123" width="3" height="1" fill="#2f3235" fill-opacity="0.36"/><rect x="13" y="122" width="7" height="1" fill="#2f3235" fill-opacity="0.35"/><rect x="13" y="123" width="7" height="1" fill="#2f3235" fill-opacity="0.16"/><rect x="22" y="122" width="8" height="1" fill="#2f3235" fill-opacity="0.35"/><rect x="22" y="123" width="8" height="1" fill="#2f3235" fill-opacity="0.16"/><rect x="31" y="122" width="6" height="1" fill="#2f3235" fill-opacity="0.35"/><rect x="31" y="123" width="6" height="1" fill="#2f3235" fill-opacity="0.16"/><rect x="39" y="122" width="8" height="1" fill="#2f3235" fill-opacity="0.5"/><rect x="39" y="123" width="8" height="1" fill="#2f3235" fill-opacity="0.23"/><rect x="49" y="122" width="1" height="1" fill="#2f3235" fill-opacity="0.6"/><rect x="49" y="123" width="1" height="1" fill="#2f3235" fill-opacity="0.27"/><rect x="10" y="124" width="2" height="1" fill="#2f3235" fill-opacity="0.8"/><rect x="10" y="125" width="2" height="1" fill="#2f3235" fill-opacity="0.36"/><rect x="13" y="124" width="4" height="1" fill="#2f3235" fill-opacity="0.45"/><rect x="13" y="125" width="4" height="1" fill="#2f3235" fill-opacity="0.2"/><rect x="18" y="124" width="4" height="1" fill="#2f3235" fill-opacity="0.45"/><rect x="18" y="125" width="4" height="1" fill="#2f3235" fill-opacity="0.2"/><rect x="23" y="124" width="5" height="1" fill="#2f3235" fill-opacity="0.32"/><rect x="23" y="125" width="5" height="1" fill="#2f3235" fill-opacity="0.14"/><rect x="10" y="126" width="6" height="1" fill="#2f3235" fill-opacity="0.8"/><rect x="10" y="127" width="6" height="1" fill="#2f3235" fill-opacity="0.36"/><rect x="17" y="126" width="5" height="1" fill="#2f3235" fill-opacity="0.32"/><rect x="17" y="127" width="5" height="1" fill="#2f3235" fill-opacity="0.14"/><rect x="23" y="126" width="5" height="1" fill="#2f3235" fill-opacity="0.45"/><rect x="23" y="127" width="5" height="1" fill="#2f3235" fill-opacity="0.2"/><rect x="16" y="126" width="8" height="1" fill="#e03c3c" fill-opacity="0.8"/><rect x="16" y="127" width="10" height="1" fill="#e03c3c" fill-opacity="0.35"/><rect x="11" y="128" width="2" height="1" fill="#2f3235" fill-opacity="0.8"/><rect x="11" y="129" width="2" height="1" fill="#2f3235" fill-opacity="0.36"/><rect x="14" y="128" width="3" height="1" fill="#2f3235" fill-opacity="0.29"/><rect x="14" y="129" width="3" height="1" fill="#2f3235" fill-opacity="0.13"/><rect x="18" y="128" width="7" height="1" fill="#d2a020" fill-opacity="0.6"/><rect x="18" y="129" width="7" height="1" fill="#d2a020" fill-opacity="0.27"/><rect x="26" y="128" width="3" height="1" fill="#2f3235" fill-opacity="0.29"/><rect x="26" y="129" width="3" height="1" fill="#2f3235" fill-opacity="0.13"/><rect x="30" y="128" width="6" height="1" fill="#d2a020" fill-opacity="0.6"/><rect x="30" y="129" width="6" height="1" fill="#d2a020" fill-opacity="0.27"/><rect x="37" y="128" width="7" height="1" fill="#2f3235" fill-opacity="0.29"/><rect x="37" y="129" width="7" height="1" fill="#2f3235" fill-opacity="0.13"/><rect x="11" y="130" width="2" height="1" fill="#2f3235" fill-opacity="0.8"/><rect x="11" y="131" width="2" height="1" fill="#2f3235" fill-opacity="0.36"/><rect x="14" y="130" width="5" height="1" fill="#2f3235" fill-opacity="0.42"/><rect x="14" y="131" width="5" height="1" fill="#2f3235" fill-opacity="0.19"/><rect x="20" y="130" width="4" height="1" fill="#2f3235" fill-opacity="0.42"/><rect x="20" y="131" width="4" height="1" fill="#2f3235" fill-opacity="0.19"/><rect x="26" y="130" width="5" height="1" fill="#2f3235" fill-opacity="0.42"/><rect x="26" y="131" width="5" height="1" fill="#2f3235" fill-opacity="0.19"/><rect x="33" y="130" width="3" height="1" fill="#2f3235" fill-opacity="0.29"/><rect x="33" y="131" width="3" height="1" fill="#2f3235" fill-opacity="0.13"/><rect x="11" y="132" width="6" height="1" fill="#2f3235" fill-opacity="0.8"/><rect x="11" y="133" width="6" height="1" fill="#2f3235" fill-opacity="0.36"/><rect x="19" y="132" width="4" height="1" fill="#2f3235" fill-opacity="0.42"/><rect x="19" y="133" width="4" height="1" fill="#2f3235" fill-opacity="0.19"/><rect x="24" y="132" width="5" height="1" fill="#2f3235" fill-opacity="0.29"/><rect x="24" y="133" width="5" height="1" fill="#2f3235" fill-opacity="0.13"/><rect x="30" y="132" width="9" height="1" fill="#2f3235" fill-opacity="0.42"/><rect x="30" y="133" width="9" height="1" fill="#2f3235" fill-opacity="0.19"/><rect x="41" y="132" width="3" height="1" fill="#2f3235" fill-opacity="0.29"/><rect x="41" y="133" width="3" height="1" fill="#2f3235" fill-opacity="0.13"/><rect x="11" y="134" width="6" height="1" fill="#2f3235" fill-opacity="0.8"/><rect x="11" y="135" width="6" height="1" fill="#2f3235" fill-opacity="0.36"/><rect x="18" y="134" width="4" height="1" fill="#d2a020" fill-opacity="0.6"/><rect x="18" y="135" width="4" height="1" fill="#d2a020" fill-opacity="0.27"/><rect x="23" y="134" width="5" height="1" fill="#2f3235" fill-opacity="0.42"/><rect x="23" y="135" width="5" height="1" fill="#2f3235" fill-opacity="0.19"/><rect x="29" y="134" width="6" height="1" fill="#2f3235" fill-opacity="0.29"/><rect x="29" y="135" width="6" height="1" fill="#2f3235" fill-opacity="0.13"/><rect x="10" y="136" width="5" height="1" fill="#2f3235" fill-opacity="0.8"/><rect x="10" y="137" width="5" height="1" fill="#2f3235" fill-opacity="0.36"/><rect x="9" y="138" width="6" height="1" fill="#2f3235" fill-opacity="0.8"/><rect x="9" y="139" width="6" height="1" fill="#2f3235" fill-opacity="0.36"/><rect x="17" y="138" width="9" height="1" fill="#2f3235" fill-opacity="0.35"/><rect x="17" y="139" width="9" height="1" fill="#2f3235" fill-opacity="0.16"/><rect x="27" y="138" width="4" height="1" fill="#2f3235" fill-opacity="0.6"/><rect x="27" y="139" width="4" height="1" fill="#2f3235" fill-opacity="0.27"/><rect x="32" y="138" width="8" height="1" fill="#2f3235" fill-opacity="0.5"/><rect x="32" y="139" width="8" height="1" fill="#2f3235" fill-opacity="0.23"/><rect x="41" y="138" width="5" height="1" fill="#2f3235" fill-opacity="0.35"/><rect x="41" y="139" width="5" height="1" fill="#2f3235" fill-opacity="0.16"/><rect x="10" y="140" width="6" height="1" fill="#2f3235" fill-opacity="0.8"/><rect x="10" y="141" width="6" height="1" fill="#2f3235" fill-opacity="0.36"/><rect x="17" y="140" width="4" height="1" fill="#2f3235" fill-opacity="0.54"/><rect x="17" y="141" width="4" height="1" fill="#2f3235" fill-opacity="0.24"/><rect x="9" y="140" width="14" height="1" fill="#111" fill-opacity="0.55"/><rect x="10" y="142" width="6" height="1" fill="#2f3235" fill-opacity="0.8"/><rect x="10" y="143" width="6" height="1" fill="#2f3235" fill-opacity="0.36"/><rect x="17" y="142" width="5" height="1" fill="#2f3235" fill-opacity="0.32"/><rect x="17" y="143" width="5" height="1" fill="#2f3235" fill-opacity="0.14"/><rect x="23" y="142" width="5" height="1" fill="#d2a020" fill-opacity="0.6"/><rect x="23" y="143" width="5" height="1" fill="#d2a020" fill-opacity="0.27"/><rect x="16" y="142" width="11" height="1" fill="#e03c3c" fill-opacity="0.8"/><rect x="16" y="143" width="10" height="1" fill="#e03c3c" fill-opacity="0.35"/><rect x="9" y="142" width="14" height="1" fill="#111" fill-opacity="0.55"/><rect x="11" y="144" width="6" height="1" fill="#2f3235" fill-opacity="0.8"/><rect x="11" y="145" width="6" height="1" fill="#2f3235" fill-opacity="0.36"/><rect x="19" y="144" width="6" height="1" fill="#2f3235" fill-opacity="0.42"/><rect x="19" y="145" width="6" height="1" fill="#2f3235" fill-opacity="0.19"/><rect x="26" y="144" width="5" height="1" fill="#d2a020" fill-opacity="0.6"/><rect x="26" y="145" width="5" height="1" fill="#d2a020" fill-opacity="0.27"/><rect x="32" y="144" width="9" height="1" fill="#2f3235" fill-opacity="0.5"/><rect x="32" y="145" width="9" height="1" fill="#2f3235" fill-opacity="0.23"/><rect x="42" y="144" width="6" height="1" fill="#2f3235" fill-opacity="0.42"/><rect x="42" y="145" width="6" height="1" fill="#2f3235" fill-opacity="0.19"/><rect x="9" y="144" width="14" height="1" fill="#111" fill-opacity="0.55"/><rect x="11" y="146" width="4" height="1" fill="#2f3235" fill-opacity="0.8"/><rect x="11" y="147" width="4" height="1" fill="#2f3235" fill-opacity="0.36"/><rect x="17" y="146" width="4" height="1" fill="#2f3235" fill-opacity="0.5"/><rect x="17" y="147" width="4" height="1" fill="#2f3235" fill-opacity="0.23"/><rect x="23" y="146" width="3" height="1" fill="#2f3235" fill-opacity="0.42"/><rect x="23" y="147" width="3" height="1" fill="#2f3235" fill-opacity="0.19"/><rect x="27" y="146" width="9" height="1" fill="#2f3235" fill-opacity="0.42"/><rect x="27" y="147" width="9" height="1" fill="#2f3235" fill-opacity="0.19"/><rect x="38" y="146" width="5" height="1" fill="#2f3235" fill-opacity="0.29"/><rect x="38" y="147" width="5" height="1" fill="#2f3235" fill-opacity="0.13"/><rect x="9" y="146" width="14" height="1" fill="#111" fill-opacity="0.55"/><rect x="11" y="148" width="2" height="1" fill="#2f3235" fill-opacity="0.8"/><rect x="11" y="149" width="2" height="1" fill="#2f3235" fill-opacity="0.36"/><rect x="14" y="148" width="4" height="1" fill="#2f3235" fill-opacity="0.42"/><rect x="14" y="149" width="4" height="1" fill="#2f3235" fill-opacity="0.19"/><rect x="19" y="148" width="3" height="1" fill="#2f3235" fill-opacity="0.42"/><rect x="19" y="149" width="3" height="1" fill="#2f3235" fill-opacity="0.19"/><rect x="23" y="148" width="3" height="1" fill="#2f3235" fill-opacity="0.5"/><rect x="23" y="149" width="3" height="1" fill="#2f3235" fill-opacity="0.23"/><rect x="28" y="148" width="6" height="1" fill="#2f3235" fill-opacity="0.29"/><rect x="28" y="149" width="6" height="1" fill="#2f3235" fill-opacity="0.13"/><rect x="35" y="148" width="4" height="1" fill="#2f3235" fill-opacity="0.5"/><rect x="35" y="149" width="4" height="1" fill="#2f3235" fill-opacity="0.23"/><rect x="40" y="148" width="5" height="1" fill="#2f3235" fill-opacity="0.29"/><rect x="40" y="149" width="5" height="1" fill="#2f3235" fill-opacity="0.13"/><rect x="46" y="148" width="2" height="1" fill="#2f3235" fill-opacity="0.42"/><rect x="46" y="149" width="2" height="1" fill="#2f3235" fill-opacity="0.19"/><rect x="9" y="148" width="14" height="1" fill="#111" fill-opacity="0.55"/><rect x="11" y="150" width="2" height="1" fill="#2f3235" fill-opacity="0.8"/><rect x="11" y="151" width="2" height="1" fill="#2f3235" fill-opacity="0.36"/><rect x="14" y="150" width="6" height="1" fill="#2f3235" fill-opacity="0.42"/><rect x="14" y="151" width="6" height="1" fill="#2f3235" fill-opacity="0.19"/><rect x="21" y="150" width="6" height="1" fill="#2f3235" fill-opacity="0.29"/><rect x="21" y="151" width="6" height="1" fill="#2f3235" fill-opacity="0.13"/><rect x="29" y="150" width="3" height="1" fill="#2f3235" fill-opacity="0.5"/><rect x="29" y="151" width="3" height="1" fill="#2f3235" fill-opacity="0.23"/><rect x="34" y="150" width="8" height="1" fill="#2f3235" fill-opacity="0.29"/><rect x="34" y="151" width="8" height="1" fill="#2f3235" fill-opacity="0.13"/><rect x="43" y="150" width="1" height="1" fill="#d2a020" fill-opacity="0.6"/><rect x="43" y="151" width="1" height="1" fill="#d2a020" fill-opacity="0.27"/><rect x="9" y="150" width="14" height="1" fill="#111" fill-opacity="0.55"/><rect x="10" y="152" width="5" height="1" fill="#2f3235" fill-opacity="0.8"/><rect x="10" y="153" width="5" height="1" fill="#2f3235" fill-opacity="0.36"/><rect x="9" y="152" width="14" height="1" fill="#111" fill-opacity="0.55"/><rect x="2" y="154" width="51" height="1" fill="#31363b" fill-opacity="0.85"/></svg>
  <div class="a" style="left:963px;top:631px;width:58px;height:16px;background:rgba(61,174,233,.18);border:1px solid #2f7fb5;border-radius:2px"></div>
  <svg class="a" style="left:986px;top:652px" width="14" height="8"><path d="M1.5 1.5 L7 7 L12.5 1.5" fill="none" stroke="#bcbebf" stroke-width="1"/></svg>
  <!-- search bar -->
  <div class="a" style="left:560px;top:670px;width:321px;height:30px;background:#fcfcfc;border:1px solid #c4c6c8;border-radius:3px"></div>
  <div class="a" style="left:580px;top:675px;width:282px;height:20px;background:#d3f6e0"></div>
  <svg class="a" style="left:838px;top:678px" width="18" height="14"><path d="M0.5 7 L6 1 H17.5 V13 H6 Z" fill="#31363b"/><path d="M8.5 4 L14 10 M14 4 L8.5 10" stroke="#eff0f1" stroke-width="1.6"/></svg>
  <svg class="a" style="left:864px;top:681px" width="12" height="8"><path d="M1 1.5 L6 6.5 L11 1.5" fill="none" stroke="#31363b" stroke-width="1.1"/></svg>
  <svg class="a" style="left:894px;top:677px" width="16" height="16"><path d="M2.5 4.5 L8 10 L13.5 4.5 M2 12.5 H14" fill="none" stroke="#31363b" stroke-width="1.2"/></svg>
  <svg class="a" style="left:928px;top:677px" width="16" height="16"><path d="M2.5 12.5 L8 7 L13.5 12.5 M2 3.5 H14" fill="none" stroke="#31363b" stroke-width="1.2"/></svg>
  <div class="a" style="left:957px;top:672px;width:26px;height:26px;background:#c8c9cb;border-radius:3px"></div>
  <div class="a" style="left:963px;top:676px;font-size:15px;line-height:18px;color:#31363b">A</div>
  <div class="a" style="left:973.5px;top:679px;font-size:7px;line-height:8px;font-weight:bold;color:#31363b">B</div>
  <svg class="a" style="left:1002px;top:677px" width="16" height="16"><path d="M1.5 4.5 H14.5 M1.5 11.5 H14.5" stroke="#31363b" stroke-width="1.2"/><circle cx="10" cy="4.5" r="2" fill="#31363b"/><circle cx="5" cy="11.5" r="2" fill="#eff0f1" stroke="#31363b" stroke-width="1.1"/></svg>
</div>

<div class="a" style="left:-4px;top:244px;width:682px;height:488px;border-radius:4px 4px 3px 3px;box-shadow:0 0 0 1px rgba(0,0,0,.28),0 2px 9px rgba(0,0,0,.22)"></div>
<div class="a" style="left:-4px;top:244px;width:682px;height:488px;background:#eff0f1;overflow:hidden;border-radius:4px 4px 3px 3px">
<div class="t" style="left:269px;top:7px;color:#bdc3c7">david : telnet — Konsole</div>
<div class="a" style="left:0;top:0;width:682px;height:1px;background:#d5d6d7"></div>
<svg class="a" style="left:9px;top:5px" width="18" height="18" viewBox="0 0 18 18"><defs><linearGradient id="ig-4" x1="0" y1="0" x2="1" y2="1"><stop offset="0" stop-color="#4f5757"/><stop offset="1" stop-color="#2a2f32"/></linearGradient></defs><rect x="0" y="0" width="18" height="18" rx="1.2" fill="url(#ig-4)"/><path d="M7 4.7 L11.3 9 L7 13.3" fill="none" stroke="#9ea3a5" stroke-width="1.2"/></svg>
<div class="t" style="left:14px;top:37px">Datei</div>
<div class="t" style="left:65.5px;top:37px">Bearbeiten</div>
<div class="t" style="left:150px;top:37px">Ansicht</div>
<div class="t" style="left:214px;top:37px">Bookmarks</div>
<div class="t" style="left:302px;top:37px">Einstellungen</div>
<div class="t" style="left:403px;top:37px">Hilfe</div>
<div class="term" style="left:4px;top:59px;width:654px;height:397px"><pre style="left:1px;top:1.5px">Trying 127.0.0.1...
Connected to 127.0.0.1.
Escape character is &#x27;^]&#x27;.
while i &lt; 20 do print i; i:=i+1 od end
0 1 2 3 4 5 6 7 8 9 10 11 12 13 14 15 16 17 18 19 20 Connection closed by foreign host.
david@talkortell:~$ telnet 127.0.0.1 4024
Trying 127.0.0.1...
Connected to 127.0.0.1.
Escape character is &#x27;^]&#x27;.
while i &lt; 20 do print i; i:=i+1 od end
0 1 2 3 4 5 6 7 8 9 10 11 12 13 14 15 16 17 18 19 20 Connection closed by foreign host.
david@talkortell:~$ telnet 127.0.0.1 4025
Trying 127.0.0.1...
Connected to 127.0.0.1.
Escape character is &#x27;^]&#x27;.
while i &lt; 10 do print i; i:= i+1 od end
0 1 2 3 4 5 6 7 8 9 10 Connection closed by foreign host.
david@talkortell:~$ telnet 127.0.0.1 4026
Trying 127.0.0.1...
Connected to 127.0.0.1.
Escape character is &#x27;^]&#x27;.
while i &lt; 20 do print i; i:=i+1 od end
0 1 2 3 4 5 6 7 8 9 10 11 12 13 14 15 16 17 18 19 20 while i&lt; 10 do print i; i:=i+1 od end</pre><div class="a" style="left:1px;top:380px;width:7px;height:13px;border:1px solid #b2b2b2"></div></div>
<div class="a" style="left:4px;top:58px;width:654px;height:1px;background:#fcfcfc"></div>
<div class="a" style="left:658px;top:59px;width:1px;height:397px;background:#fcfcfc"></div>
<div class="a" style="left:663px;top:79px;width:10px;height:357px;border-radius:5px;background:#babbbd"></div>
<div class="a" style="left:663px;top:385px;width:10px;height:51px;border-radius:5px;background:#7a7d81"></div>
<svg class="a" style="left:661px;top:443px" width="14" height="8"><path d="M2 1.5 L7 6.2 L12 1.5" fill="none" stroke="#bcbebf" stroke-width="1"/></svg>
<div class="a" style="left:4px;top:456px;width:678px;height:1px;background:#d0d2d4"></div>
<div class="a" style="left:4px;top:456px;width:337px;height:28px;background:#eff0f1;border:1px solid #c4c6c8;border-top:none;border-radius:0 0 3px 3px"></div>
<svg class="a" style="left:12px;top:461px" width="16" height="16" viewBox="0 0 16 16"><defs><linearGradient id="ih-4" x1="0" y1="0" x2="1" y2="1"><stop offset="0" stop-color="#4f5757"/><stop offset="1" stop-color="#2a2f32"/></linearGradient></defs><rect x="0" y="0" width="16" height="16" rx="1" fill="url(#ih-4)"/><path d="M6.3 4 L10.3 8 L6.3 12" fill="none" stroke="#9ea3a5" stroke-width="1.1"/></svg>
<div class="t" style="left:145px;top:463px">david : telnet</div>
</div>
<div class="a" style="left:346px;top:0px;width:682px;height:488px;border-radius:4px 4px 3px 3px;box-shadow:0 0 0 1px rgba(0,0,0,.28),0 2px 9px rgba(0,0,0,.22)"></div>
<div class="a" style="left:346px;top:0px;width:682px;height:488px;background:#eff0f1;overflow:hidden;border-radius:4px 4px 3px 3px">
<div class="a" style="left:0;top:0;width:682px;height:28px;background:linear-gradient(#555d65,#454c53);border-top-left-radius:4px"></div>
<div class="a" style="left:0;top:28px;width:682px;height:1px;background:#3daee9"></div>
<div class="t" style="left:257px;top:7px;color:#eff0f1">david : telnet — Konsole &lt;2&gt;</div>
<svg class="a" style="left:9px;top:5px" width="18" height="18" viewBox="0 0 18 18"><defs><linearGradient id="ig346" x1="0" y1="0" x2="1" y2="1"><stop offset="0" stop-color="#4f5757"/><stop offset="1" stop-color="#2a2f32"/></linearGradient></defs><rect x="0" y="0" width="18" height="18" rx="1.2" fill="url(#ig346)"/><path d="M7 4.7 L11.3 9 L7 13.3" fill="none" stroke="#9ea3a5" stroke-width="1.2"/></svg>
<svg class="a" style="left:600px;top:0px" width="82" height="28" viewBox="0 0 82 28"><path d="M10.5 11.5 L16 17 L21.5 11.5" fill="none" stroke="#eff0f1" stroke-width="1.1"/><path d="M34.5 16.5 L40 11 L45.5 16.5" fill="none" stroke="#eff0f1" stroke-width="1.1"/><circle cx="64" cy="14" r="9" fill="#eff0f1"/><path d="M60 10 L68 18 M68 10 L60 18" stroke="#31363b" stroke-width="1.1"/></svg>
<div class="t" style="left:14px;top:37px">Datei</div>
<div class="t" style="left:65.5px;top:37px">Bearbeiten</div>
<div class="t" style="left:150px;top:37px">Ansicht</div>
<div class="t" style="left:214px;top:37px">Bookmarks</div>
<div class="t" style="left:302px;top:37px">Einstellungen</div>
<div class="t" style="left:403px;top:37px">Hilfe</div>
<div class="term" style="left:4px;top:59px;width:654px;height:397px"><pre style="left:1px;top:1.5px">david@talkortell:~$ telnet 127.0.0.1 4022
Trying 127.0.0.1...
Connected to 127.0.0.1.
Escape character is &#x27;^]&#x27;.
while i &lt; 20 do print i; i:=i+1 od end
0 1 2 3 4 5 6 7 8 9 10 Connection closed by foreign host.
david@talkortell:~$ telnet 127.0.0.1 4026
Trying 127.0.0.1...
Connected to 127.0.0.1.
Escape character is &#x27;^]&#x27;.
while i &lt; 100 do print i;  i:=i+1 od end
0 1 2 3 4 5 6 7 8 9 10 11 12 13 14 15 16 17 18 19 20 21 22 23 24 25 26 27 28 29 30 31 32 33 3
4 35 36 37 38 39 40 41 42 43 44 45 46 47 48 49 50 51 52 53 54 55 56 57 58 59 60 61 62 63 64 6
5 66 67 68 69 70 71 72 73 74 75 76 77 78 79 80 81 82 83 84 85 86 87 88 89 90 91 92 93 94 95 9
6 97 98 99 100</pre><div class="a" style="left:106px;top:198px;width:7px;height:13px;background:#b2b2b2"></div></div>
<div class="a" style="left:4px;top:58px;width:654px;height:1px;background:#fcfcfc"></div>
<div class="a" style="left:658px;top:59px;width:1px;height:397px;background:#fcfcfc"></div>
<svg class="a" style="left:661px;top:65px" width="14" height="8"><path d="M2 6.5 L7 1.8 L12 6.5" fill="none" stroke="#bcbebf" stroke-width="1"/></svg>
<div class="a" style="left:663px;top:79px;width:10px;height:357px;border-radius:5px;background:#7a7d81"></div>
<svg class="a" style="left:661px;top:443px" width="14" height="8"><path d="M2 1.5 L7 6.2 L12 1.5" fill="none" stroke="#bcbebf" stroke-width="1"/></svg>
<div class="a" style="left:4px;top:456px;width:678px;height:1px;background:#d0d2d4"></div>
<div class="a" style="left:4px;top:456px;width:337px;height:28px;background:#eff0f1;border:1px solid #c4c6c8;border-top:none;border-radius:0 0 3px 3px"></div>
<svg class="a" style="left:12px;top:461px" width="16" height="16" viewBox="0 0 16 16"><defs><linearGradient id="ih346" x1="0" y1="0" x2="1" y2="1"><stop offset="0" stop-color="#4f5757"/><stop offset="1" stop-color="#2a2f32"/></linearGradient></defs><rect x="0" y="0" width="16" height="16" rx="1" fill="url(#ih346)"/><path d="M6.3 4 L10.3 8 L6.3 12" fill="none" stroke="#9ea3a5" stroke-width="1.1"/></svg>
<div class="t" style="left:145px;top:463px">david : telnet</div>
</div>

<div class="a" style="left:0;top:727px;width:1024px;height:4px;background:linear-gradient(rgba(0,0,0,0),rgba(0,0,0,.28))"></div>
<div id="tb" class="a" style="left:0;top:731px;width:1024px;height:37px;background:#dee0e1;border-top:1px solid #9c9e9f">
  <!-- KDE logo -->
  <svg class="a" style="left:0;top:1px" width="36" height="34" viewBox="0 0 36 34">
    <g fill="#31363b">
    <path d="M22.92 21.33 A6.5 6.5 0 1 1 15.38 11.49" fill="none" stroke="#31363b" stroke-width="1.9"/>
    <rect x="24.20" y="16.10" width="4.4" height="3" transform="rotate(180 17.6 17.6)"/><rect x="24.20" y="16.10" width="4.4" height="3" transform="rotate(225 17.6 17.6)"/><rect x="24.20" y="16.10" width="4.4" height="3" transform="rotate(135 17.6 17.6)"/><rect x="24.20" y="16.10" width="4.4" height="3" transform="rotate(90 17.6 17.6)"/><rect x="24.20" y="16.10" width="4.4" height="3" transform="rotate(45 17.6 17.6)"/>
    <path d="M15.9 5.2 H19.7 V12.4 L26.4 5.3 H29.8 L22.6 12.8 L29.6 20.5 H25.6 L19.7 14 V21.5 H15.9 Z"/>
    </g>
  </svg>
  <!-- task separators -->
  <div class="a" style="left:39px;top:2px;width:125px;height:3px;background:#bfc1c3"></div>
  <div class="a" style="left:166px;top:2px;width:125px;height:3px;background:#bfc1c3"></div>
  <div class="a" style="left:293px;top:2px;width:125px;height:3px;background:#bfc1c3"></div>
  <div class="a" style="left:420px;top:2px;width:125px;height:3px;background:#bfc1c3"></div>
  <div class="a" style="left:547px;top:2px;width:125px;height:3px;background:#3daee9"></div>
  <!-- folder icon -->
  <svg class="a" style="left:44px;top:8px" width="22" height="21" viewBox="0 0 22 21">
    <defs><linearGradient id="fd" x1="0" y1="0" x2="1" y2="1"><stop offset="0" stop-color="#4aa8f0"/><stop offset="1" stop-color="#1a7ddc"/></linearGradient></defs>
    <path d="M1 1 H9 L10 2 H21 V20 H1 Z" fill="#2a78b5"/>
    <rect x="1.5" y="4" width="19" height="3" fill="#fff"/>
    <path d="M1 7 H21 V20 H1 Z" fill="url(#fd)"/>
  </svg>
  <div class="t" style="left:72px;top:11px">david — Dol...</div>
  <!-- firefox -->
  <svg class="a" style="left:171px;top:7px" width="22" height="22" viewBox="0 0 22 22">
    <defs>
      <linearGradient id="ffo" x1="0.85" y1="0.1" x2="0.2" y2="0.9"><stop offset="0" stop-color="#ffe23f"/><stop offset=".4" stop-color="#ff8a20"/><stop offset="1" stop-color="#e8284e"/></linearGradient>
      <linearGradient id="ffg" x1="0.2" y1="0" x2="0.8" y2="1"><stop offset="0" stop-color="#3a8ff0"/><stop offset="1" stop-color="#6b34c8"/></linearGradient>
    </defs>
    <circle cx="11" cy="11.5" r="10.2" fill="url(#ffo)"/>
    <circle cx="12" cy="10.8" r="6.2" fill="url(#ffg)"/>
    <path d="M4 9 C5 6 8 5 10 6 C8.5 7 8 8.5 9.5 9.5 C11 10.5 13 10 13.5 12 C13 14.5 10 15.5 7.5 14.5 C5.5 13.5 4 11.5 4 9 Z" fill="#ff7a1f"/>
    <path d="M13 2 C16 1.5 19.5 4 20.5 8 C18.5 5.5 16 4.5 13.5 4.5 Z" fill="#ffd93a"/>
  </svg>
  <div class="t" style="left:199px;top:11px">Linux-UNIX-...</div>
  <!-- kate doc icon -->
  <svg class="a" style="left:301px;top:8px" width="16" height="20" viewBox="0 0 16 20">
    <rect x="0.5" y="1" width="15" height="18" fill="#000" fill-opacity=".12"/>
    <rect x="0.5" y="0.5" width="14.5" height="17.5" fill="#fcfcfc" stroke="#d6d7d8" stroke-width=".6"/>
    <g style="filter:blur(0.3px)">
    <rect x="3" y="2.5" width="3.5" height="1.4" fill="#6ec6f0"/><rect x="9" y="3.5" width="2" height="2" fill="#f0a0e0" fill-opacity=".7"/>
    <rect x="4" y="5.5" width="6" height="1.4" fill="#8fdcb0"/>
    <rect x="8.5" y="7.5" width="5" height="4" fill="#f4b0ea" fill-opacity=".7"/>
    <rect x="3" y="9.5" width="5" height="1.4" fill="#6ec6f0"/>
    <rect x="3.5" y="10.8" width="7" height="1.4" fill="#8fdcb0"/><rect x="11" y="10.5" width="2.5" height="1.6" fill="#f0a0e0" fill-opacity=".8"/>
    <rect x="3" y="13" width="3" height="1.4" fill="#a8d8f5"/><rect x="9" y="13.5" width="2.5" height="1.6" fill="#f080e0" fill-opacity=".8"/>
    <rect x="3" y="15.5" width="5.5" height="1.4" fill="#8fdcb0"/>
    </g>
  </svg>
  <div class="t" style="left:326px;top:11px">tcpiplang26c...</div>
  <!-- kmail icon -->
  <svg class="a" style="left:426px;top:8px" width="20" height="21" viewBox="0 0 20 21">
    <defs><linearGradient id="km" x1="0" y1="0" x2="0" y2="1"><stop offset="0" stop-color="#16b9f6"/><stop offset="1" stop-color="#2090ea"/></linearGradient>
    <linearGradient id="kw" x1="0" y1="0" x2="0" y2="1"><stop offset="0" stop-color="#fdfdfd"/><stop offset="1" stop-color="#e9eaeb"/></linearGradient></defs>
    <path d="M0.5 9 L10 4 L19.5 9 V19 H0.5 Z" fill="#f4f5f5"/>
    <path d="M3.5 0.5 H13.5 L16.5 3.5 V12 L10 16 L3.5 12 Z" fill="url(#km)"/>
    <path d="M13.5 0.5 L16.5 3.5 H13.5 Z" fill="#3a2b2b"/>
    <path d="M9.5 5 L11.5 7 L9.5 9" fill="none" stroke="#fff" stroke-width="1" stroke-opacity=".9"/>
    <rect x="5.5" y="7" width="1" height="1" fill="#fff" fill-opacity=".6"/><rect x="7" y="10" width="1.2" height="1" fill="#fff" fill-opacity=".6"/>
    <path d="M0.5 9 L10 15.5 L19.5 9 V19 H0.5 Z" fill="url(#kw)"/>
    <rect x="3" y="19.3" width="14" height="0.8" fill="#9cc8ee" fill-opacity=".6"/>
  </svg>
  <div class="t" style="left:453px;top:11px">david@talko...</div>
  <!-- konsole icon -->
  <svg class="a" style="left:553px;top:8.5px" width="20" height="27" viewBox="0 0 20 27">
    <defs><linearGradient id="kti" x1="0" y1="0" x2="1" y2="1"><stop offset="0" stop-color="#4f5757"/><stop offset="1" stop-color="#2a2f32"/></linearGradient></defs>
    <rect x="0.5" y="0.2" width="19" height="18.8" rx="0.8" fill="url(#kti)"/>
    <path d="M7.8 4.5 L12 9 L7.8 13.5" fill="none" stroke="#9ea3a5" stroke-width="1.2"/>
    <circle cx="9.5" cy="19.7" r="5" fill="#2bc46c" stroke="#40303a" stroke-opacity=".5" stroke-width=".6"/>
    <path d="M9.5 16.8 V22.6 M6.6 19.7 H12.4" stroke="#fff" stroke-width="1.7"/>
  </svg>
  <div class="t" style="left:580px;top:11px">Konsole</div>
  <!-- tray -->
  <svg class="a" style="left:683px;top:10px" width="19" height="17" viewBox="0 0 19 17">
    <path d="M14.5 3.5 A7.2 7.2 0 1 0 12.5 14.8" fill="none" stroke="#31363b" stroke-width="1.1"/>
    <path d="M8.5 3.2 L12.3 7.3 H10.1 V11.8 H6.9 V7.3 H4.7 Z" fill="#31363b"/>
    <circle cx="14.8" cy="13" r="3.1" fill="#da4453"/>
  </svg>
  <svg class="a" style="left:706px;top:9px" width="23" height="20" viewBox="0 0 23 20">
    <rect x="5.5" y="0.5" width="16.5" height="11" fill="#4a4e51"/><rect x="7" y="2" width="13.5" height="7.5" fill="#0e0f10"/>
    <rect x="0.5" y="4.5" width="16.5" height="11" fill="#55595c"/><rect x="2" y="6" width="13.5" height="7.5" fill="#0e0f10"/>
    <rect x="3" y="17" width="11" height="2" fill="#5f6366"/><rect x="7" y="15.5" width="3" height="1.5" fill="#5f6366"/>
    <path d="M8.5 12.5 L14 9.5 L17.5 13 L12 16.5 Z" fill="#e8e6e0"/><path d="M14 9.5 L15 9 L16 10 Z" fill="#e8c860"/>
  </svg>
  <svg class="a" style="left:734px;top:8px" width="20" height="20" viewBox="0 0 20 20">
    <circle cx="10" cy="10" r="9.7" fill="#3daee9"/><circle cx="10" cy="10" r="9.7" fill="#1d99f3" fill-opacity=".5"/>
    <circle cx="10.5" cy="5.5" r="1.2" fill="#fff"/>
    <path d="M10 7.5 V11 H13 L14 14.5 M10 9 H12.5 M8.3 9.5 A3.3 3.3 0 1 0 12.3 13.8" fill="none" stroke="#fff" stroke-width="1.1"/>
  </svg>
  <svg class="a" style="left:761px;top:9px" width="18" height="18" viewBox="0 0 18 18">
    <circle cx="9" cy="9" r="7.8" fill="none" stroke="#31363b" stroke-width="1.2"/><path d="M7 5.5 L12 9 L7 12.5 Z" fill="#31363b"/>
  </svg>
  <svg class="a" style="left:787px;top:9px" width="18" height="19" viewBox="0 0 18 19">
    <rect x="5.5" y="0.5" width="12" height="12" fill="none" stroke="#31363b" stroke-width="1.1"/><rect x="9" y="13" width="5" height="3" fill="#31363b"/><rect x="7" y="16" width="9" height="1.5" fill="#31363b"/>
    <rect x="0.5" y="0.5" width="3.5" height="6" fill="#eff0f1" stroke="#31363b" stroke-width="1"/><path d="M2.2 7 V12 H5" fill="none" stroke="#31363b" stroke-width="1"/>
  </svg>
  <svg class="a" style="left:815px;top:8px" width="15" height="19" viewBox="0 0 15 19">
    <rect x="0.6" y="4" width="13.8" height="14.4" fill="none" stroke="#31363b" stroke-width="1.2"/>
    <rect x="3" y="1" width="9" height="4" fill="#31363b"/>
    <path d="M3 8.5 H12 M3 11 H10 M3 13.5 H8" stroke="#31363b" stroke-width="1"/>
  </svg>
  <svg class="a" style="left:839px;top:9px" width="18" height="18" viewBox="0 0 18 18">
    <path d="M1 6 H4 L9 1.5 V16.5 L4 12 H1 Z" fill="#31363b"/>
    <path d="M11.5 5.5 A5 5 0 0 1 11.5 12.5 M13.5 3 A8 8 0 0 1 13.5 15" fill="none" stroke="#31363b" stroke-width="1.3"/>
  </svg>
  <svg class="a" style="left:867px;top:15px" width="14" height="8"><path d="M1 7 L7 1 L13 7 Z" fill="#31363b"/></svg>
  <!-- clock -->
  <div class="a" style="left:889px;top:3px;font-size:15.5px;line-height:18px;white-space:pre;will-change:transform">19:50:09</div>
  <div class="a" style="left:955px;top:5px;font-size:12.6px;line-height:14px;white-space:pre;transform:scaleX(0.86);transform-origin:0 0">(CEST)</div>
  <div class="a" style="left:911px;top:18px;font-size:15.5px;line-height:18px;white-space:pre;will-change:transform">12.04.20</div>
  <svg class="a" style="left:1001px;top:13px" width="13" height="11"><path d="M0 1 H13 M0 5 H13 M0 9 H13" stroke="#7f8386" stroke-width="2"/></svg>
</div>

<svg class="a" style="left:585px;top:706px" width="18" height="26" viewBox="0 0 18 26"><path d="M3.5 4.2 L12.8 14 L10.2 16.6 L10.2 21.3 L6.6 18.6 L3.5 18.6 Z" fill="#4d4d4d" stroke="#fff" stroke-width="2.2" stroke-linejoin="round" paint-order="stroke"/></svg>
</body></html>
